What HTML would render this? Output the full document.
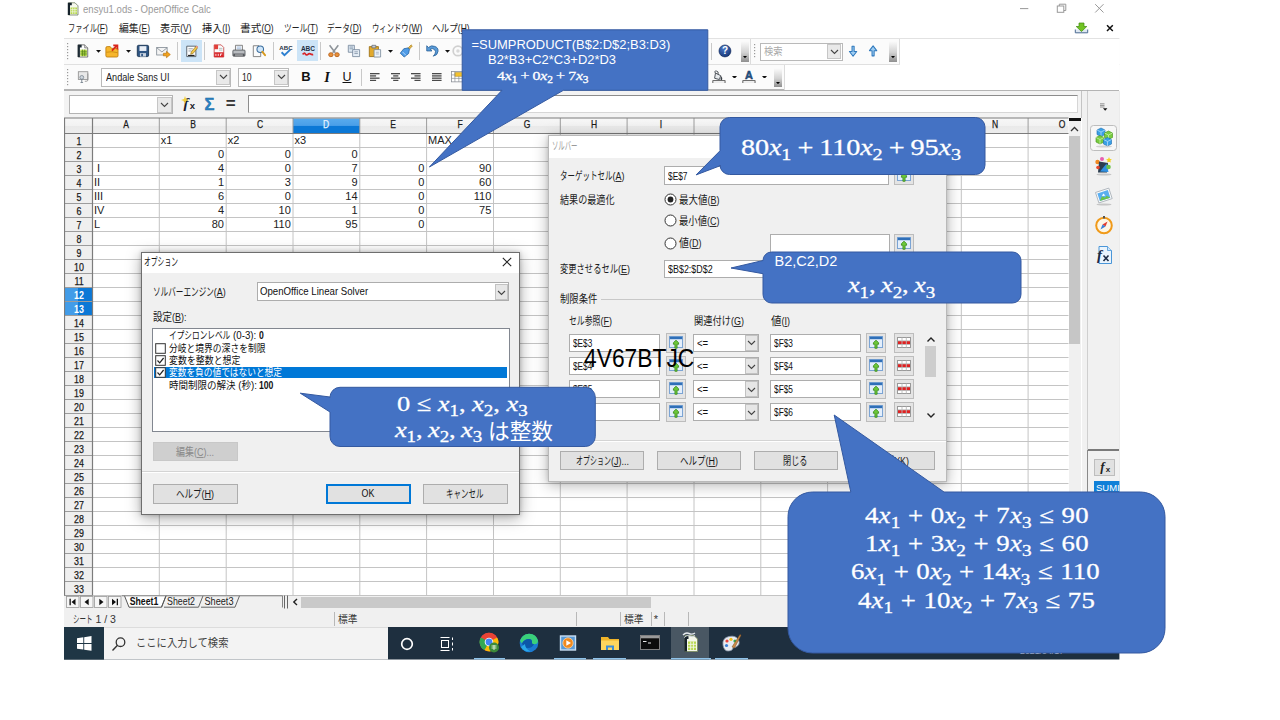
<!DOCTYPE html>
<html lang="ja"><head><meta charset="utf-8"><title>ensyu1.ods - OpenOffice Calc</title>
<style>
html,body{margin:0;padding:0;background:#fff;}
body{width:1280px;height:720px;overflow:hidden;position:relative;font-family:"Liberation Sans",sans-serif;}
#shot{position:absolute;left:0;top:0;width:1280px;height:720px;clip-path:inset(0 160.600px 60.500px 64px);background:#fff;}
div,svg{position:absolute;box-sizing:border-box;}
svg.t{overflow:visible;pointer-events:none}
svg text{font-family:"Liberation Sans","Noto Sans CJK JP",sans-serif;}
.x{white-space:nowrap;}
.m{font-family:"Liberation Serif",serif;color:#fff;white-space:pre;-webkit-text-stroke:.3px #fff;}
.m i{font-style:italic;}
.m sub{font-size:72%;vertical-align:baseline;position:relative;top:0.33em;line-height:0;font-style:normal;}
</style></head><body>
<div id="shot">
<div class="x" style="left:83.2px;transform:scaleX(0.932);transform-origin:0 50%;top:2.8px;height:14.4px;line-height:14.4px;font-size:10.30px;color:#9a9a9a;">ensyu1.ods - OpenOffice Calc</div>
<svg style="left:66.800px;top:2px" width="12" height="13.500" viewBox="0 0 12 13.500"><path d="M1.500 .8H8l3 3V13H1.500z" fill="#f6f8ee" stroke="#5a6a4a" stroke-width=".7"/><path d="M.8 .8h4v2.500H3V13H.8z" fill="#16222b"/><path d="M3.500 5.500H10V12H3.500z" fill="#b7d84b"/><path d="M3.500 7.700H10M3.500 9.800H10M5.700 5.500V12M7.900 5.500V12" stroke="#f6f8ee" stroke-width=".7"/></svg>
<svg style="left:1010px;top:0" width="110" height="20" viewBox="0 0 110 20"><g stroke="#999" stroke-width="1" fill="none"><path d="M10 8.600H18.300"/><rect x="47.300" y="6" width="6.500" height="6.300"/><path d="M49.300 6V4.200H55.800V10.500H53.800"/><path d="M85.200 4.200L93.500 12.500M93.500 4.200L85.200 12.500"/></g></svg>
<svg class="t" style="left:67.2px;top:20.4px" width="43.8" height="16.2" viewBox="0 0 43.8 16.2"><text xml:space="preserve" style="white-space:pre" x="1.0" y="11.9" font-size="10.58" fill="#222" textLength="29.0" lengthAdjust="spacingAndGlyphs">ファイル</text><text xml:space="preserve" style="white-space:pre" x="30.0" y="11.9" font-size="10.58" fill="#222" textLength="2.8" lengthAdjust="spacingAndGlyphs">(</text><text xml:space="preserve" style="white-space:pre" x="32.8" y="11.9" font-size="10.58" fill="#222" textLength="5.2" lengthAdjust="spacingAndGlyphs">F</text><rect x="32.8" y="13.2" width="5.2" height="0.9" fill="#222"/><text xml:space="preserve" style="white-space:pre" x="38.0" y="11.9" font-size="10.58" fill="#222" textLength="2.8" lengthAdjust="spacingAndGlyphs">)</text></svg>
<svg class="t" style="left:118.0px;top:20.4px" width="35.0" height="16.2" viewBox="0 0 35.0 16.2"><text xml:space="preserve" style="white-space:pre" x="1.0" y="11.9" font-size="10.58" fill="#222" textLength="19.7" lengthAdjust="spacingAndGlyphs">編集</text><text xml:space="preserve" style="white-space:pre" x="20.7" y="11.9" font-size="10.58" fill="#222" textLength="2.8" lengthAdjust="spacingAndGlyphs">(</text><text xml:space="preserve" style="white-space:pre" x="23.5" y="11.9" font-size="10.58" fill="#222" textLength="5.6" lengthAdjust="spacingAndGlyphs">E</text><rect x="23.5" y="13.2" width="5.6" height="0.9" fill="#222"/><text xml:space="preserve" style="white-space:pre" x="29.2" y="11.9" font-size="10.58" fill="#222" textLength="2.8" lengthAdjust="spacingAndGlyphs">)</text></svg>
<svg class="t" style="left:159.0px;top:20.4px" width="35.6" height="16.2" viewBox="0 0 35.6 16.2"><text xml:space="preserve" style="white-space:pre" x="1.0" y="11.9" font-size="10.58" fill="#222" textLength="20.3" lengthAdjust="spacingAndGlyphs">表示</text><text xml:space="preserve" style="white-space:pre" x="21.3" y="11.9" font-size="10.58" fill="#222" textLength="2.8" lengthAdjust="spacingAndGlyphs">(</text><text xml:space="preserve" style="white-space:pre" x="24.1" y="11.9" font-size="10.58" fill="#222" textLength="5.6" lengthAdjust="spacingAndGlyphs">V</text><rect x="24.1" y="13.2" width="5.6" height="0.9" fill="#222"/><text xml:space="preserve" style="white-space:pre" x="29.8" y="11.9" font-size="10.58" fill="#222" textLength="2.8" lengthAdjust="spacingAndGlyphs">)</text></svg>
<svg class="t" style="left:200.7px;top:20.4px" width="32.3" height="16.2" viewBox="0 0 32.3 16.2"><text xml:space="preserve" style="white-space:pre" x="1.0" y="11.9" font-size="10.58" fill="#222" textLength="20.3" lengthAdjust="spacingAndGlyphs">挿入</text><text xml:space="preserve" style="white-space:pre" x="21.3" y="11.9" font-size="10.58" fill="#222" textLength="2.8" lengthAdjust="spacingAndGlyphs">(</text><text xml:space="preserve" style="white-space:pre" x="24.1" y="11.9" font-size="10.58" fill="#222" textLength="2.4" lengthAdjust="spacingAndGlyphs">I</text><rect x="24.1" y="13.2" width="2.4" height="0.9" fill="#222"/><text xml:space="preserve" style="white-space:pre" x="26.5" y="11.9" font-size="10.58" fill="#222" textLength="2.8" lengthAdjust="spacingAndGlyphs">)</text></svg>
<svg class="t" style="left:239.4px;top:20.4px" width="37.6" height="16.2" viewBox="0 0 37.6 16.2"><text xml:space="preserve" style="white-space:pre" x="1.0" y="11.9" font-size="10.58" fill="#222" textLength="21.4" lengthAdjust="spacingAndGlyphs">書式</text><text xml:space="preserve" style="white-space:pre" x="22.4" y="11.9" font-size="10.58" fill="#222" textLength="2.8" lengthAdjust="spacingAndGlyphs">(</text><text xml:space="preserve" style="white-space:pre" x="25.2" y="11.9" font-size="10.58" fill="#222" textLength="6.6" lengthAdjust="spacingAndGlyphs">O</text><rect x="25.2" y="13.2" width="6.6" height="0.9" fill="#222"/><text xml:space="preserve" style="white-space:pre" x="31.8" y="11.9" font-size="10.58" fill="#222" textLength="2.8" lengthAdjust="spacingAndGlyphs">)</text></svg>
<svg class="t" style="left:283.0px;top:20.4px" width="38.0" height="16.2" viewBox="0 0 38.0 16.2"><text xml:space="preserve" style="white-space:pre" x="1.0" y="11.9" font-size="10.58" fill="#222" textLength="23.2" lengthAdjust="spacingAndGlyphs">ツール</text><text xml:space="preserve" style="white-space:pre" x="24.2" y="11.9" font-size="10.58" fill="#222" textLength="2.8" lengthAdjust="spacingAndGlyphs">(</text><text xml:space="preserve" style="white-space:pre" x="27.0" y="11.9" font-size="10.58" fill="#222" textLength="5.2" lengthAdjust="spacingAndGlyphs">T</text><rect x="27.0" y="13.2" width="5.2" height="0.9" fill="#222"/><text xml:space="preserve" style="white-space:pre" x="32.2" y="11.9" font-size="10.58" fill="#222" textLength="2.8" lengthAdjust="spacingAndGlyphs">)</text></svg>
<svg class="t" style="left:326.4px;top:20.4px" width="38.6" height="16.2" viewBox="0 0 38.6 16.2"><text xml:space="preserve" style="white-space:pre" x="1.0" y="11.9" font-size="10.58" fill="#222" textLength="22.8" lengthAdjust="spacingAndGlyphs">データ</text><text xml:space="preserve" style="white-space:pre" x="23.8" y="11.9" font-size="10.58" fill="#222" textLength="2.8" lengthAdjust="spacingAndGlyphs">(</text><text xml:space="preserve" style="white-space:pre" x="26.7" y="11.9" font-size="10.58" fill="#222" textLength="6.1" lengthAdjust="spacingAndGlyphs">D</text><rect x="26.7" y="13.2" width="6.1" height="0.9" fill="#222"/><text xml:space="preserve" style="white-space:pre" x="32.8" y="11.9" font-size="10.58" fill="#222" textLength="2.8" lengthAdjust="spacingAndGlyphs">)</text></svg>
<svg class="t" style="left:370.7px;top:20.4px" width="54.3" height="16.2" viewBox="0 0 54.3 16.2"><text xml:space="preserve" style="white-space:pre" x="1.0" y="11.9" font-size="10.58" fill="#222" textLength="36.7" lengthAdjust="spacingAndGlyphs">ウィンドウ</text><text xml:space="preserve" style="white-space:pre" x="37.7" y="11.9" font-size="10.58" fill="#222" textLength="2.8" lengthAdjust="spacingAndGlyphs">(</text><text xml:space="preserve" style="white-space:pre" x="40.5" y="11.9" font-size="10.58" fill="#222" textLength="8.0" lengthAdjust="spacingAndGlyphs">W</text><rect x="40.5" y="13.2" width="8.0" height="0.9" fill="#222"/><text xml:space="preserve" style="white-space:pre" x="48.5" y="11.9" font-size="10.58" fill="#222" textLength="2.8" lengthAdjust="spacingAndGlyphs">)</text></svg>
<svg class="t" style="left:431.4px;top:20.4px" width="41.6" height="16.2" viewBox="0 0 41.6 16.2"><text xml:space="preserve" style="white-space:pre" x="1.0" y="11.9" font-size="10.58" fill="#222" textLength="25.8" lengthAdjust="spacingAndGlyphs">ヘルプ</text><text xml:space="preserve" style="white-space:pre" x="26.8" y="11.9" font-size="10.58" fill="#222" textLength="2.8" lengthAdjust="spacingAndGlyphs">(</text><text xml:space="preserve" style="white-space:pre" x="29.7" y="11.9" font-size="10.58" fill="#222" textLength="6.1" lengthAdjust="spacingAndGlyphs">H</text><rect x="29.7" y="13.2" width="6.1" height="0.9" fill="#222"/><text xml:space="preserve" style="white-space:pre" x="35.8" y="11.9" font-size="10.58" fill="#222" textLength="2.8" lengthAdjust="spacingAndGlyphs">)</text></svg>
<svg style="left:1074px;top:22px" width="42" height="12" viewBox="0 0 42 12"><path d="M1.300 7.500V10.800H13.700V7.500" fill="#dfe8f2" stroke="#4a6a92" stroke-width="1"/><path d="M5 1h5v3.500h2.800L7.500 9.500 2.200 4.500H5z" fill="#72c424" stroke="#3f8a10" stroke-width=".7"/><path d="M33 3.200l5.800 5.800m0-5.800L33 9" stroke="#111" stroke-width="1.500"/></svg>
<div style="left:64.0px;top:38.0px;width:1056.0px;height:1.0px;background:#e2e2e2"></div>
<div style="left:64.0px;top:39.0px;width:1056.0px;height:51.0px;background:#fbfbfb"></div>
<div style="left:64.0px;top:64.0px;width:1056.0px;height:1.0px;background:#e0e0e0"></div>
<div style="left:64.0px;top:89.0px;width:1055.0px;height:2.0px;background:#b4b4b4"></div>
<div style="left:64.0px;top:91.0px;width:1018.0px;height:27.0px;background:#f3f3f3"></div>
<svg style="left:66px;top:42px" width="3" height="20" viewBox="0 0 3 20"><g fill="#9a9a9a"><rect x="1" y="1" width="1.200" height="1.200"/><rect x="1" y="4" width="1.200" height="1.200"/><rect x="1" y="7" width="1.200" height="1.200"/><rect x="1" y="10" width="1.200" height="1.200"/><rect x="1" y="13" width="1.200" height="1.200"/><rect x="1" y="16" width="1.200" height="1.200"/></g></svg>
<svg style="left:66px;top:68px" width="3" height="20" viewBox="0 0 3 20"><g fill="#9a9a9a"><rect x="1" y="1" width="1.200" height="1.200"/><rect x="1" y="4" width="1.200" height="1.200"/><rect x="1" y="7" width="1.200" height="1.200"/><rect x="1" y="10" width="1.200" height="1.200"/><rect x="1" y="13" width="1.200" height="1.200"/><rect x="1" y="16" width="1.200" height="1.200"/></g></svg>
<div style="left:101.0px;top:68.0px;width:130.0px;height:18.5px;background:#fff;border:1px solid #b9b9b9"></div>
<div class="x" style="left:105.5px;transform:scaleX(0.788);transform-origin:0 50%;top:69.2px;height:16.2px;line-height:16.2px;font-size:11.60px;color:#222;">Andale Sans UI</div>
<div style="left:216.0px;top:69.5px;width:14.0px;height:15.5px;background:#e9e9e9;border:1px solid #c6c6c6"></div>
<svg style="left:219px;top:74px" width="9" height="6" viewBox="0 0 9 6"><path d="M1 1l3.500 3.500L8 1" fill="none" stroke="#444" stroke-width="1.100"/></svg>
<div style="left:238.0px;top:68.0px;width:51.0px;height:18.5px;background:#fff;border:1px solid #b9b9b9"></div>
<div class="x" style="left:242.2px;transform:scaleX(0.744);transform-origin:0 50%;top:69.2px;height:16.2px;line-height:16.2px;font-size:11.60px;color:#222;">10</div>
<div style="left:274.0px;top:69.5px;width:14.0px;height:15.5px;background:#e9e9e9;border:1px solid #c6c6c6"></div>
<svg style="left:277px;top:74px" width="9" height="6" viewBox="0 0 9 6"><path d="M1 1l3.500 3.500L8 1" fill="none" stroke="#444" stroke-width="1.100"/></svg>
<div class="x" style="left:156.0px;width:300px;text-align:center;top:68.4px;height:18.2px;line-height:18.2px;font-size:13.00px;color:#111;font-weight:bold">B</div>
<div class="x" style="left:177.0px;width:300px;text-align:center;top:67.2px;height:20.3px;line-height:20.3px;font-size:14.50px;color:#111;font-style:italic;font-family:'Liberation Serif',serif;font-weight:bold">I</div>
<div class="x" style="left:197.0px;width:300px;text-align:center;top:68.8px;height:17.5px;line-height:17.5px;font-size:12.50px;color:#111;text-decoration:underline">U</div>
<div style="left:69.0px;top:95.0px;width:104.0px;height:19.0px;background:#fff;border:1px solid #b4b4b4"></div>
<div style="left:157.0px;top:96.5px;width:15.0px;height:16.0px;background:#e9e9e9;border:1px solid #c6c6c6"></div>
<svg style="left:160px;top:102px" width="9" height="6" viewBox="0 0 9 6"><path d="M1 1l3.500 3.500L8 1" fill="none" stroke="#444" stroke-width="1.100"/></svg>
<div class="x" style="left:38.0px;width:300px;text-align:center;top:92.5px;height:21.0px;line-height:21.0px;font-size:15.00px;color:#1a1a2a;font-style:italic;font-family:'Liberation Serif',serif;font-weight:bold;margin-left:-2px">f</div>
<div class="x" style="left:42.3px;width:300px;text-align:center;top:98.6px;height:13.3px;line-height:13.3px;font-size:9.50px;color:#1a1a2a;font-weight:bold">x</div>
<div class="x" style="left:59.5px;width:300px;text-align:center;top:92.5px;height:23.1px;line-height:23.1px;font-size:16.50px;color:#2a86c8;font-weight:bold;-webkit-text-stroke:.4px #1a5c94">Σ</div>
<div class="x" style="left:80.8px;width:300px;text-align:center;top:91.9px;height:23.8px;line-height:23.8px;font-size:17.00px;color:#333;font-weight:bold">=</div>
<svg style="left:180.500px;top:95.500px" width="8" height="8" viewBox="0 0 8 8"><path d="M4 0l1 3 3 1-3 1-1 3-1-3-3-1 3-1z" fill="#f2cf3a"/></svg>
<div style="left:248.0px;top:95.0px;width:829.5px;height:18.0px;background:#fff;border:1px solid #d6d6d6;border-top:1.500px solid #8c8c8c;border-left:1.500px solid #8c8c8c"></div>
<div style="left:1081.0px;top:91.0px;width:1.0px;height:27.0px;background:#c4c4c4"></div>
<svg style="left:76.2px;top:44.2px" width="13.92" height="13.92" viewBox="0 0 16 16"><path d="M2.500 1H10l3.500 3.500V15H2.500z" fill="#fdfdfd" stroke="#555" stroke-width=".9"/><path d="M2 1h4.500v3H4.500V15H2z" fill="#1c2a33"/><path d="M5 6.500H12.500V14H5z" fill="#b7d84b"/><path d="M5 9h7.500M5 11.500h7.500M7.500 6.500V14M10 6.500V14" stroke="#4d7f16" stroke-width=".8"/><path d="M10 1v3.500h3.500" fill="#ddd" stroke="#555" stroke-width=".7"/></svg>
<svg style="left:95.5px;top:49.8px" width="5.05" height="2.87" viewBox="0 0 5.8 3.3"><path d="M0 0h5.800L2.900 3.300z" fill="#111"/></svg>
<svg style="left:105.4px;top:44.2px" width="13.92" height="13.92" viewBox="0 0 16 16"><path d="M1 4.500Q1 3 2.500 3H6l1.500 2H14q1 0 1 1v7.500q0 1.500-1.500 1.500H2.500Q1 15 1 13.500z" fill="#f7b62d" stroke="#b97708" stroke-width=".9"/><path d="M1.500 9.500Q8 8 14.500 10" stroke="#c98b10" stroke-width="1" fill="none"/><path d="M8 7.500L13 2.500M9.500 1.500h4.800v4.800" stroke="#d9251c" stroke-width="2" fill="none"/></svg>
<svg style="left:125.5px;top:49.8px" width="5.05" height="2.87" viewBox="0 0 5.8 3.3"><path d="M0 0h5.800L2.900 3.300z" fill="#111"/></svg>
<svg style="left:136.0px;top:44.2px" width="13.92" height="13.92" viewBox="0 0 16 16"><rect x="1.500" y="1.500" width="13" height="13" rx="1.500" fill="#2f5583" stroke="#16304f" stroke-width="1"/><rect x="4" y="2.500" width="8" height="5.500" fill="#e9eef5"/><rect x="4.500" y="10.500" width="7" height="4" fill="#c9d3e0"/><rect x="6" y="11.300" width="2" height="2.700" fill="#2f5583"/></svg>
<svg style="left:156.2px;top:44.7px" width="15.66" height="13.92" viewBox="0 0 18 16"><rect x=".8" y="3" width="12" height="8.500" fill="#f4f4f4" stroke="#7d8790" stroke-width=".9"/><path d="M1 3.300L6.800 8l5.800-4.700" fill="none" stroke="#7d8790" stroke-width=".9"/><path d="M8.500 9.500h3.500V7.300L16.500 11 12 14.700V12.500H8.500z" fill="#f2a11a" stroke="#b66f07" stroke-width=".7"/></svg>
<div style="left:176.9px;top:42.0px;width:1.0px;height:18.0px;background:#c9c9c9"></div>
<div style="left:181.0px;top:40.3px;width:20.8px;height:21.5px;background:#cce4f7"></div>
<svg style="left:184.5px;top:44.2px" width="13.92" height="13.92" viewBox="0 0 16 16"><path d="M2 2.500H12.500V14.500H2z" fill="#fdfdfd" stroke="#4a5560" stroke-width="1"/><path d="M4 5.500h5M4 8h3.500" stroke="#8a949e" stroke-width="1"/><path d="M3.500 12.500h7.500v1.300H3.500z" fill="#222"/><path d="M7.200 9.200L13 2.200l2 1.600L9.300 10.900l-2.800 1z" fill="#f2c84b" stroke="#8a6a14" stroke-width=".7"/><path d="M12.300 3l.9-1.100 2 1.600-.9 1.100z" fill="#e88a9a"/></svg>
<div style="left:203.9px;top:42.0px;width:1.0px;height:18.0px;background:#c9c9c9"></div>
<svg style="left:211.5px;top:44.2px" width="13.92" height="13.92" viewBox="0 0 16 16"><path d="M2.500 1H10.500l3 3V15H2.500z" fill="#fbfbfb" stroke="#c43a3a" stroke-width=".9"/><path d="M2.500 1h4.500v5H2.500z" fill="#e0403a"/><path d="M2.500 9.500H13.500V15H2.500z" fill="#d8262a"/><path d="M4.500 11.300v2.400M7.200 11.300v2.400M9.800 11.300v2.400M9.800 11.500h2" stroke="#fff" stroke-width="1"/><path d="M8 5h4M8 7h4" stroke="#9aa" stroke-width=".8"/></svg>
<svg style="left:231.8px;top:44.2px" width="13.92" height="13.92" viewBox="0 0 16 16"><path d="M4 1.500H12V8H4z" fill="#f7f7f7" stroke="#666" stroke-width=".9"/><path d="M5.500 3.500h5M5.500 5.500h5" stroke="#8fb0d8" stroke-width=".9"/><path d="M1 8Q1 7 2 7H14q1 0 1 1v5.500H1z" fill="#b9bcc0" stroke="#4c4f54" stroke-width=".9"/><path d="M1.500 11H14.500V14.500H1.500z" fill="#55585d"/><path d="M3.500 12.700h9" stroke="#d8d8d8" stroke-width="1"/></svg>
<svg style="left:252.0px;top:44.2px" width="13.92" height="13.92" viewBox="0 0 16 16"><path d="M1.500 2H8l2 2V14.500H1.500z" fill="#fbfbfb" stroke="#666" stroke-width=".9"/><circle cx="9.500" cy="6" r="3.800" fill="#cfe6fa" stroke="#3c6e9e" stroke-width="1.200"/><path d="M12 9l3 3.800" stroke="#d89a1e" stroke-width="2.200" stroke-linecap="round"/></svg>
<div style="left:272.5px;top:42.0px;width:1.0px;height:18.0px;background:#c9c9c9"></div>
<svg style="left:279.4px;top:44.2px" width="13.92" height="13.92" viewBox="0 0 16 16"><text x="8" y="7" font-size="7" font-weight="bold" text-anchor="middle" fill="#1f2f44">ABC</text><path d="M3 9.500l3.300 3.300L13 6.500" fill="none" stroke="#2c7fd0" stroke-width="2.200"/></svg>
<div style="left:297.3px;top:40.3px;width:20.7px;height:21.2px;background:#cce4f7"></div>
<svg style="left:300.7px;top:44.2px" width="13.92" height="13.92" viewBox="0 0 16 16"><text x="8" y="8" font-size="7.500" font-weight="bold" text-anchor="middle" fill="#1f2f44">ABC</text><path d="M2 12q1.500-2.500 3-.5t3 .5 3-.5 3 .5" fill="none" stroke="#d8262a" stroke-width="2"/></svg>
<div style="left:320.3px;top:42.0px;width:1.0px;height:18.0px;background:#c9c9c9"></div>
<svg style="left:327.4px;top:44.2px" width="13.92" height="13.92" viewBox="0 0 16 16"><path d="M3 1.500L9.500 10M13 1.500L6.500 10" stroke="#8d9399" stroke-width="1.800"/><ellipse cx="4.500" cy="12.300" rx="2.600" ry="2.300" fill="#e8913a" stroke="#b5601a" stroke-width="1"/><ellipse cx="11.500" cy="12.300" rx="2.600" ry="2.300" fill="#e8913a" stroke="#b5601a" stroke-width="1"/></svg>
<svg style="left:347.4px;top:44.2px" width="13.92" height="13.92" viewBox="0 0 16 16"><path d="M1.500 1.500H8.500V9.500H1.500z" fill="#dde8f2" stroke="#6f8297" stroke-width=".9"/><path d="M3 3.500h4M3 5.500h4" stroke="#6f8297" stroke-width=".8"/><path d="M6.500 6.500H14.500V14.500H6.500z" fill="#e6eef6" stroke="#6f8297" stroke-width=".9"/><path d="M8.500 9h4M8.500 11h4" stroke="#6f8297" stroke-width=".8"/></svg>
<svg style="left:368.0px;top:44.2px" width="13.92" height="13.92" viewBox="0 0 16 16"><path d="M1.500 3H12V14.500H1.500z" fill="#e2a92c" stroke="#94660c" stroke-width=".9"/><path d="M4.500 1.500h4.500v3H4.500z" fill="#c7ccd2" stroke="#596069" stroke-width=".8"/><path d="M7 6.500H14.500V15H7z" fill="#eef3f8" stroke="#76869a" stroke-width=".9"/><path d="M9 9.500h3.500M9 11.500h3.500" stroke="#8ea0b5" stroke-width=".8"/></svg>
<svg style="left:387.5px;top:49.8px" width="5.05" height="2.87" viewBox="0 0 5.8 3.3"><path d="M0 0h5.800L2.900 3.300z" fill="#111"/></svg>
<svg style="left:398.6px;top:44.2px" width="13.92" height="13.92" viewBox="0 0 16 16"><path d="M10.500 4.500L14 1l1.300 1.300L12 6z" fill="#e9b84a" stroke="#9a7412" stroke-width=".7"/><path d="M5.500 5.500l5-1 1.500 1.500-1 5L6 15 1.500 10.500z" fill="#4f9be6" stroke="#215f9f" stroke-width=".9"/><path d="M4 9l4 4" stroke="#bfe0ff" stroke-width="1"/></svg>
<div style="left:418.7px;top:42.0px;width:1.0px;height:18.0px;background:#c9c9c9"></div>
<svg style="left:424.7px;top:44.2px" width="13.92" height="13.92" viewBox="0 0 16 16"><path d="M2 2v6h6L6 6q3-1.500 5 .5t.5 5l-2 2.500q5-1 5.500-5.500T11 2.700Q7 1 4 4z" fill="#5a9bd8" stroke="#285f96" stroke-width=".9"/></svg>
<svg style="left:444.5px;top:49.8px" width="5.05" height="2.87" viewBox="0 0 5.8 3.3"><path d="M0 0h5.800L2.900 3.300z" fill="#111"/></svg>
<svg style="left:451.0px;top:44.2px" width="13.92" height="13.92" viewBox="0 0 16 16"><circle cx="8" cy="8" r="5.500" fill="none" stroke="#d0d0d0" stroke-width="2"/><circle cx="8" cy="8" r="2" fill="#d8d8d8"/></svg>
<div style="left:710.5px;top:43.0px;width:1.0px;height:17.0px;background:#c9c9c9"></div>
<svg style="left:718.0px;top:44.1px" width="13.92" height="13.92" viewBox="0 0 16 16"><defs><radialGradient id="hq" cx=".4" cy=".3" r=".8"><stop offset="0" stop-color="#4a78c8"/><stop offset="1" stop-color="#13306e"/></radialGradient></defs><circle cx="8" cy="8" r="6.900" fill="url(#hq)" stroke="#0e2454" stroke-width=".7"/><text x="8" y="12" font-size="11.500" font-weight="bold" text-anchor="middle" fill="#fff">?</text></svg>
<div style="left:741.0px;top:41.0px;width:7.5px;height:20.8px;background:linear-gradient(#fcfcfc,#d2d2d2 55%,#8f8f8f)"></div>
<svg style="left:742.7px;top:56.4px" width="4.00" height="2.26" viewBox="0 0 4.6 2.6"><path d="M0 0h4.600L2.300 2.600z" fill="#000"/></svg>
<div style="left:749.5px;top:39.0px;width:1.0px;height:25.0px;background:#dcdcdc"></div>
<svg style="left:753px;top:43px" width="3" height="18" viewBox="0 0 3 18"><g fill="#9a9a9a"><rect x="1" y="1" width="1.200" height="1.200"/><rect x="1" y="4" width="1.200" height="1.200"/><rect x="1" y="7" width="1.200" height="1.200"/><rect x="1" y="10" width="1.200" height="1.200"/><rect x="1" y="13" width="1.200" height="1.200"/></g></svg>
<div style="left:760.0px;top:42.5px;width:82.7px;height:18.0px;background:#fff;border:1px solid #b9b9b9"></div>
<svg class="t" style="left:763.0px;top:43.2px" width="23.0" height="16.2" viewBox="0 0 23.0 16.2"><text xml:space="preserve" style="white-space:pre" x="1.0" y="11.9" font-size="10.58" fill="#a8a8a8" textLength="18.5" lengthAdjust="spacingAndGlyphs">検索</text></svg>
<div style="left:827.0px;top:44.0px;width:14.3px;height:15.0px;background:#e9e9e9;border:1px solid #c6c6c6"></div>
<svg style="left:829.700px;top:48.500px" width="9" height="6" viewBox="0 0 9 6"><path d="M1 1l3.500 3.500L8 1" fill="none" stroke="#444" stroke-width="1.100"/></svg>
<svg style="left:846.5px;top:45.1px" width="12.18" height="12.18" viewBox="0 0 14 14"><path d="M5.800 1.500h2.400v6h3L7 13 2.800 7.500h3z" fill="#9fcdf2" stroke="#2f79bd" stroke-width="1.200" stroke-linejoin="round"/></svg>
<svg style="left:867.2px;top:45.1px" width="12.18" height="12.18" viewBox="0 0 14 14"><path d="M5.800 12.500h2.400v-6h3L7 1 2.800 6.500h3z" fill="#9fcdf2" stroke="#2f79bd" stroke-width="1.200" stroke-linejoin="round"/></svg>
<div style="left:889.0px;top:41.0px;width:7.8px;height:20.8px;background:linear-gradient(#fcfcfc,#d2d2d2 55%,#8f8f8f)"></div>
<svg style="left:890.9px;top:56.4px" width="4.00" height="2.26" viewBox="0 0 4.6 2.6"><path d="M0 0h4.600L2.300 2.600z" fill="#000"/></svg>
<div style="left:899.0px;top:39.0px;width:1.0px;height:25.0px;background:#dcdcdc"></div>
<div style="left:900.0px;top:39.0px;width:220.0px;height:51.0px;background:#fff"></div>
<div style="left:784.5px;top:65.0px;width:336.0px;height:25.0px;background:#fff"></div>
<svg style="left:76.7px;top:69.5px" width="13.92" height="13.92" viewBox="0 0 16 16"><rect x="1.500" y="2" width="11" height="9" fill="#e8e8e8" stroke="#8a8a8a" stroke-width=".9"/><rect x="3.500" y="4" width="11" height="9.500" fill="#f4f4f4" stroke="#8a8a8a" stroke-width=".9" opacity=".0"/><circle cx="5.500" cy="8.500" r="2.200" fill="#cfd6dd" stroke="#6d7a86" stroke-width=".8"/><path d="M5.500 10.500V14.500M4 14.500h3" stroke="#6d7a86" stroke-width="1"/><path d="M12.500 4v7.500q0 1.500-2 1.500H9" fill="none" stroke="#8a8a8a" stroke-width=".9"/></svg>
<div style="left:361.2px;top:69.0px;width:1.0px;height:17.0px;background:#c9c9c9"></div>
<svg style="left:370.2px;top:72.9px" width="9.57" height="8.27" viewBox="0 0 11 9.5"><rect x="0.0" y="0.0" width="11" height="1.500" fill="#4a4a4a"/><rect x="0.0" y="2.6" width="7" height="1.500" fill="#4a4a4a"/><rect x="0.0" y="5.2" width="11" height="1.500" fill="#4a4a4a"/><rect x="0.0" y="7.8" width="7" height="1.500" fill="#4a4a4a"/></svg>
<svg style="left:390.5px;top:72.9px" width="9.57" height="8.27" viewBox="0 0 11 9.5"><rect x="0.0" y="0.0" width="11" height="1.500" fill="#4a4a4a"/><rect x="2.5" y="2.6" width="6" height="1.500" fill="#4a4a4a"/><rect x="0.0" y="5.2" width="11" height="1.500" fill="#4a4a4a"/><rect x="2.5" y="7.8" width="6" height="1.500" fill="#4a4a4a"/></svg>
<svg style="left:411.2px;top:72.9px" width="9.57" height="8.27" viewBox="0 0 11 9.5"><rect x="0.0" y="0.0" width="11" height="1.500" fill="#4a4a4a"/><rect x="4.0" y="2.6" width="7" height="1.500" fill="#4a4a4a"/><rect x="0.0" y="5.2" width="11" height="1.500" fill="#4a4a4a"/><rect x="4.0" y="7.8" width="7" height="1.500" fill="#4a4a4a"/></svg>
<svg style="left:432.1px;top:72.9px" width="9.57" height="8.27" viewBox="0 0 11 9.5"><rect x="0.0" y="0.0" width="11" height="1.500" fill="#4a4a4a"/><rect x="0.0" y="2.6" width="11" height="1.500" fill="#4a4a4a"/><rect x="0.0" y="5.2" width="11" height="1.500" fill="#4a4a4a"/><rect x="0.0" y="7.8" width="11" height="1.500" fill="#4a4a4a"/></svg>
<svg style="left:450.6px;top:71.3px" width="12.18" height="11.31" viewBox="0 0 14 13"><rect x=".5" y=".5" width="13" height="12" fill="#fff" stroke="#8a8f96" stroke-width=".9"/><rect x="4.500" y="2" width="9" height="4" fill="#f5c32e" stroke="#b98d12" stroke-width=".7"/><path d="M.5 4.500H4.500M.5 8.500H13.500M4.500 .5V12.500M9 6V12.500" stroke="#8a8f96" stroke-width=".8"/></svg>
<svg style="left:711.6px;top:69.5px" width="13.92" height="13.92" viewBox="0 0 16 16"><path d="M4 3.500L10 6.500 8.500 11 3 9.500z" fill="#e8ebee" stroke="#3a3f46" stroke-width="1"/><path d="M4 3.500Q2 1 5 1.200T7 5" fill="none" stroke="#3a3f46" stroke-width="1"/><path d="M10.500 7q2 2.500 1.200 4t-2-.3z" fill="#3a3f46"/><rect x="1" y="12.300" width="14" height="3" fill="#fff" stroke="#333" stroke-width=".9"/></svg>
<svg style="left:731.9px;top:75.6px" width="5.05" height="2.87" viewBox="0 0 5.8 3.3"><path d="M0 0h5.800L2.900 3.300z" fill="#111"/></svg>
<svg style="left:742.0px;top:69.5px" width="13.92" height="13.92" viewBox="0 0 16 16"><text x="8" y="10.500" font-size="12.500" font-weight="bold" text-anchor="middle" fill="#24588f" stroke="#0f2c4f" stroke-width=".5">A</text><rect x="1" y="12.300" width="14" height="3" fill="#fff" stroke="#333" stroke-width=".9"/></svg>
<svg style="left:761.5px;top:75.6px" width="5.05" height="2.87" viewBox="0 0 5.8 3.3"><path d="M0 0h5.800L2.900 3.300z" fill="#111"/></svg>
<div style="left:774.3px;top:67.8px;width:7.9px;height:19.4px;background:linear-gradient(#fcfcfc,#d2d2d2 55%,#8f8f8f)"></div>
<svg style="left:776.2px;top:81.8px" width="4.00" height="2.26" viewBox="0 0 4.6 2.6"><path d="M0 0h4.600L2.300 2.600z" fill="#000"/></svg>
<div style="left:783.5px;top:65.0px;width:1.0px;height:25.0px;background:#dcdcdc"></div>
<svg style="left:0;top:0" width="1280" height="720" viewBox="0 0 1280 720"><defs><linearGradient id="hg" x1="0" y1="0" x2="0" y2="1"><stop offset="0" stop-color="#f7f7f7"/><stop offset=".5" stop-color="#f2f2f2"/><stop offset=".5" stop-color="#e9e9e9"/><stop offset="1" stop-color="#ededed"/></linearGradient><linearGradient id="hb" x1="0" y1="0" x2="0" y2="1"><stop offset="0" stop-color="#58abee"/><stop offset=".48" stop-color="#4a9fe8"/><stop offset=".52" stop-color="#0b78d6"/><stop offset="1" stop-color="#0b78d6"/></linearGradient></defs><rect x="64" y="118" width="1004.5" height="478" fill="#fff"/><rect x="64" y="118.0" width="1004.5" height="15.5" fill="url(#hg)"/><rect x="64" y="133.5" width="28.5" height="462.0" fill="#efefef"/><rect x="293.0" y="118.5" width="66.8" height="14.5" fill="url(#hb)"/><rect x="64.5" y="287.5" width="28.0" height="28.0" fill="#0b78d6"/><rect x="64.5" y="287.5" width="13.500" height="28.0" fill="#429ce8"/><path d="M92.5 147.5H1068.5M92.5 161.5H1068.5M92.5 175.5H1068.5M92.5 189.5H1068.5M92.5 203.5H1068.5M92.5 217.5H1068.5M92.5 231.5H1068.5M92.5 245.5H1068.5M92.5 259.5H1068.5M92.5 273.5H1068.5M92.5 287.5H1068.5M92.5 301.5H1068.5M92.5 315.5H1068.5M92.5 329.5H1068.5M92.5 343.5H1068.5M92.5 357.5H1068.5M92.5 371.5H1068.5M92.5 385.5H1068.5M92.5 399.5H1068.5M92.5 413.5H1068.5M92.5 427.5H1068.5M92.5 441.5H1068.5M92.5 455.5H1068.5M92.5 469.5H1068.5M92.5 483.5H1068.5M92.5 497.5H1068.5M92.5 511.5H1068.5M92.5 525.5H1068.5M92.5 539.5H1068.5M92.5 553.5H1068.5M92.5 567.5H1068.5M92.5 581.5H1068.5M92.5 595.5H1068.5M159.3 133.5V595.5M226.2 133.5V595.5M293.0 133.5V595.5M359.8 133.5V595.5M426.6 133.5V595.5M493.5 133.5V595.5M560.3 133.5V595.5M627.1 133.5V595.5M694.0 133.5V595.5M760.8 133.5V595.5M827.6 133.5V595.5M894.5 133.5V595.5M961.3 133.5V595.5M1028.1 133.5V595.5" stroke="#c4c4c4" stroke-width="1" fill="none"/><path d="M64 147.5H92.5M64 161.5H92.5M64 175.5H92.5M64 189.5H92.5M64 203.5H92.5M64 217.5H92.5M64 231.5H92.5M64 245.5H92.5M64 259.5H92.5M64 273.5H92.5M64 287.5H92.5M64 301.5H92.5M64 315.5H92.5M64 329.5H92.5M64 343.5H92.5M64 357.5H92.5M64 371.5H92.5M64 385.5H92.5M64 399.5H92.5M64 413.5H92.5M64 427.5H92.5M64 441.5H92.5M64 455.5H92.5M64 469.5H92.5M64 483.5H92.5M64 497.5H92.5M64 511.5H92.5M64 525.5H92.5M64 539.5H92.5M64 553.5H92.5M64 567.5H92.5M64 581.5H92.5M64 595.5H92.5M159.3 118.0V133.5M226.2 118.0V133.5M293.0 118.0V133.5M359.8 118.0V133.5M426.6 118.0V133.5M493.5 118.0V133.5M560.3 118.0V133.5M627.1 118.0V133.5M694.0 118.0V133.5M760.8 118.0V133.5M827.6 118.0V133.5M894.5 118.0V133.5M961.3 118.0V133.5M1028.1 118.0V133.5" stroke="#9c9c9c" stroke-width="1" fill="none"/><path d="M64 133.5H1068.5M92.5 118.0V595.5M64 118.0H1068.5M64.5 118.0V595.5" stroke="#7c7c7c" stroke-width="1.200" fill="none"/></svg>
<div class="x" style="left:-24.1px;width:300px;text-align:center;transform:scaleX(0.820);transform-origin:50% 50%;top:118.2px;height:14.6px;line-height:14.6px;font-size:10.40px;color:#1a1a1a;-webkit-text-stroke:.25px #1a1a1a">A</div>
<div class="x" style="left:42.7px;width:300px;text-align:center;transform:scaleX(0.820);transform-origin:50% 50%;top:118.2px;height:14.6px;line-height:14.6px;font-size:10.40px;color:#1a1a1a;-webkit-text-stroke:.25px #1a1a1a">B</div>
<div class="x" style="left:109.6px;width:300px;text-align:center;transform:scaleX(0.820);transform-origin:50% 50%;top:118.2px;height:14.6px;line-height:14.6px;font-size:10.40px;color:#1a1a1a;-webkit-text-stroke:.25px #1a1a1a">C</div>
<div class="x" style="left:176.4px;width:300px;text-align:center;transform:scaleX(0.820);transform-origin:50% 50%;top:118.2px;height:14.6px;line-height:14.6px;font-size:10.40px;color:#e6f3ff;-webkit-text-stroke:.25px #e6f3ff">D</div>
<div class="x" style="left:243.2px;width:300px;text-align:center;transform:scaleX(0.820);transform-origin:50% 50%;top:118.2px;height:14.6px;line-height:14.6px;font-size:10.40px;color:#1a1a1a;-webkit-text-stroke:.25px #1a1a1a">E</div>
<div class="x" style="left:310.1px;width:300px;text-align:center;transform:scaleX(0.820);transform-origin:50% 50%;top:118.2px;height:14.6px;line-height:14.6px;font-size:10.40px;color:#1a1a1a;-webkit-text-stroke:.25px #1a1a1a">F</div>
<div class="x" style="left:376.9px;width:300px;text-align:center;transform:scaleX(0.820);transform-origin:50% 50%;top:118.2px;height:14.6px;line-height:14.6px;font-size:10.40px;color:#1a1a1a;-webkit-text-stroke:.25px #1a1a1a">G</div>
<div class="x" style="left:443.7px;width:300px;text-align:center;transform:scaleX(0.820);transform-origin:50% 50%;top:118.2px;height:14.6px;line-height:14.6px;font-size:10.40px;color:#1a1a1a;-webkit-text-stroke:.25px #1a1a1a">H</div>
<div class="x" style="left:510.6px;width:300px;text-align:center;transform:scaleX(0.820);transform-origin:50% 50%;top:118.2px;height:14.6px;line-height:14.6px;font-size:10.40px;color:#1a1a1a;-webkit-text-stroke:.25px #1a1a1a">I</div>
<div class="x" style="left:577.4px;width:300px;text-align:center;transform:scaleX(0.820);transform-origin:50% 50%;top:118.2px;height:14.6px;line-height:14.6px;font-size:10.40px;color:#1a1a1a;-webkit-text-stroke:.25px #1a1a1a">J</div>
<div class="x" style="left:644.2px;width:300px;text-align:center;transform:scaleX(0.820);transform-origin:50% 50%;top:118.2px;height:14.6px;line-height:14.6px;font-size:10.40px;color:#1a1a1a;-webkit-text-stroke:.25px #1a1a1a">K</div>
<div class="x" style="left:711.0px;width:300px;text-align:center;transform:scaleX(0.820);transform-origin:50% 50%;top:118.2px;height:14.6px;line-height:14.6px;font-size:10.40px;color:#1a1a1a;-webkit-text-stroke:.25px #1a1a1a">L</div>
<div class="x" style="left:777.9px;width:300px;text-align:center;transform:scaleX(0.820);transform-origin:50% 50%;top:118.2px;height:14.6px;line-height:14.6px;font-size:10.40px;color:#1a1a1a;-webkit-text-stroke:.25px #1a1a1a">M</div>
<div class="x" style="left:844.7px;width:300px;text-align:center;transform:scaleX(0.820);transform-origin:50% 50%;top:118.2px;height:14.6px;line-height:14.6px;font-size:10.40px;color:#1a1a1a;-webkit-text-stroke:.25px #1a1a1a">N</div>
<div class="x" style="left:912.0px;width:300px;text-align:center;transform:scaleX(0.820);transform-origin:50% 50%;top:118.2px;height:14.6px;line-height:14.6px;font-size:10.40px;color:#1a1a1a;-webkit-text-stroke:.25px #1a1a1a">O</div>
<div class="x" style="left:-71.1px;width:300px;text-align:center;transform:scaleX(0.860);transform-origin:50% 50%;top:134.8px;height:14.4px;line-height:14.4px;font-size:10.30px;color:#1a1a1a;-webkit-text-stroke:.25px #1a1a1a">1</div>
<div class="x" style="left:-71.1px;width:300px;text-align:center;transform:scaleX(0.860);transform-origin:50% 50%;top:148.8px;height:14.4px;line-height:14.4px;font-size:10.30px;color:#1a1a1a;-webkit-text-stroke:.25px #1a1a1a">2</div>
<div class="x" style="left:-71.1px;width:300px;text-align:center;transform:scaleX(0.860);transform-origin:50% 50%;top:162.8px;height:14.4px;line-height:14.4px;font-size:10.30px;color:#1a1a1a;-webkit-text-stroke:.25px #1a1a1a">3</div>
<div class="x" style="left:-71.1px;width:300px;text-align:center;transform:scaleX(0.860);transform-origin:50% 50%;top:176.8px;height:14.4px;line-height:14.4px;font-size:10.30px;color:#1a1a1a;-webkit-text-stroke:.25px #1a1a1a">4</div>
<div class="x" style="left:-71.1px;width:300px;text-align:center;transform:scaleX(0.860);transform-origin:50% 50%;top:190.8px;height:14.4px;line-height:14.4px;font-size:10.30px;color:#1a1a1a;-webkit-text-stroke:.25px #1a1a1a">5</div>
<div class="x" style="left:-71.1px;width:300px;text-align:center;transform:scaleX(0.860);transform-origin:50% 50%;top:204.8px;height:14.4px;line-height:14.4px;font-size:10.30px;color:#1a1a1a;-webkit-text-stroke:.25px #1a1a1a">6</div>
<div class="x" style="left:-71.1px;width:300px;text-align:center;transform:scaleX(0.860);transform-origin:50% 50%;top:218.8px;height:14.4px;line-height:14.4px;font-size:10.30px;color:#1a1a1a;-webkit-text-stroke:.25px #1a1a1a">7</div>
<div class="x" style="left:-71.1px;width:300px;text-align:center;transform:scaleX(0.860);transform-origin:50% 50%;top:232.8px;height:14.4px;line-height:14.4px;font-size:10.30px;color:#1a1a1a;-webkit-text-stroke:.25px #1a1a1a">8</div>
<div class="x" style="left:-71.1px;width:300px;text-align:center;transform:scaleX(0.860);transform-origin:50% 50%;top:246.8px;height:14.4px;line-height:14.4px;font-size:10.30px;color:#1a1a1a;-webkit-text-stroke:.25px #1a1a1a">9</div>
<div class="x" style="left:-71.1px;width:300px;text-align:center;transform:scaleX(0.860);transform-origin:50% 50%;top:260.8px;height:14.4px;line-height:14.4px;font-size:10.30px;color:#1a1a1a;-webkit-text-stroke:.25px #1a1a1a">10</div>
<div class="x" style="left:-71.1px;width:300px;text-align:center;transform:scaleX(0.860);transform-origin:50% 50%;top:274.8px;height:14.4px;line-height:14.4px;font-size:10.30px;color:#1a1a1a;-webkit-text-stroke:.25px #1a1a1a">11</div>
<div class="x" style="left:-71.1px;width:300px;text-align:center;transform:scaleX(0.860);transform-origin:50% 50%;top:288.8px;height:14.4px;line-height:14.4px;font-size:10.30px;color:#fff;font-weight:bold;">12</div>
<div class="x" style="left:-71.1px;width:300px;text-align:center;transform:scaleX(0.860);transform-origin:50% 50%;top:302.8px;height:14.4px;line-height:14.4px;font-size:10.30px;color:#fff;font-weight:bold;">13</div>
<div class="x" style="left:-71.1px;width:300px;text-align:center;transform:scaleX(0.860);transform-origin:50% 50%;top:316.8px;height:14.4px;line-height:14.4px;font-size:10.30px;color:#1a1a1a;-webkit-text-stroke:.25px #1a1a1a">14</div>
<div class="x" style="left:-71.1px;width:300px;text-align:center;transform:scaleX(0.860);transform-origin:50% 50%;top:330.8px;height:14.4px;line-height:14.4px;font-size:10.30px;color:#1a1a1a;-webkit-text-stroke:.25px #1a1a1a">15</div>
<div class="x" style="left:-71.1px;width:300px;text-align:center;transform:scaleX(0.860);transform-origin:50% 50%;top:344.8px;height:14.4px;line-height:14.4px;font-size:10.30px;color:#1a1a1a;-webkit-text-stroke:.25px #1a1a1a">16</div>
<div class="x" style="left:-71.1px;width:300px;text-align:center;transform:scaleX(0.860);transform-origin:50% 50%;top:358.8px;height:14.4px;line-height:14.4px;font-size:10.30px;color:#1a1a1a;-webkit-text-stroke:.25px #1a1a1a">17</div>
<div class="x" style="left:-71.1px;width:300px;text-align:center;transform:scaleX(0.860);transform-origin:50% 50%;top:372.8px;height:14.4px;line-height:14.4px;font-size:10.30px;color:#1a1a1a;-webkit-text-stroke:.25px #1a1a1a">18</div>
<div class="x" style="left:-71.1px;width:300px;text-align:center;transform:scaleX(0.860);transform-origin:50% 50%;top:386.8px;height:14.4px;line-height:14.4px;font-size:10.30px;color:#1a1a1a;-webkit-text-stroke:.25px #1a1a1a">19</div>
<div class="x" style="left:-71.1px;width:300px;text-align:center;transform:scaleX(0.860);transform-origin:50% 50%;top:400.8px;height:14.4px;line-height:14.4px;font-size:10.30px;color:#1a1a1a;-webkit-text-stroke:.25px #1a1a1a">20</div>
<div class="x" style="left:-71.1px;width:300px;text-align:center;transform:scaleX(0.860);transform-origin:50% 50%;top:414.8px;height:14.4px;line-height:14.4px;font-size:10.30px;color:#1a1a1a;-webkit-text-stroke:.25px #1a1a1a">21</div>
<div class="x" style="left:-71.1px;width:300px;text-align:center;transform:scaleX(0.860);transform-origin:50% 50%;top:428.8px;height:14.4px;line-height:14.4px;font-size:10.30px;color:#1a1a1a;-webkit-text-stroke:.25px #1a1a1a">22</div>
<div class="x" style="left:-71.1px;width:300px;text-align:center;transform:scaleX(0.860);transform-origin:50% 50%;top:442.8px;height:14.4px;line-height:14.4px;font-size:10.30px;color:#1a1a1a;-webkit-text-stroke:.25px #1a1a1a">23</div>
<div class="x" style="left:-71.1px;width:300px;text-align:center;transform:scaleX(0.860);transform-origin:50% 50%;top:456.8px;height:14.4px;line-height:14.4px;font-size:10.30px;color:#1a1a1a;-webkit-text-stroke:.25px #1a1a1a">24</div>
<div class="x" style="left:-71.1px;width:300px;text-align:center;transform:scaleX(0.860);transform-origin:50% 50%;top:470.8px;height:14.4px;line-height:14.4px;font-size:10.30px;color:#1a1a1a;-webkit-text-stroke:.25px #1a1a1a">25</div>
<div class="x" style="left:-71.1px;width:300px;text-align:center;transform:scaleX(0.860);transform-origin:50% 50%;top:484.8px;height:14.4px;line-height:14.4px;font-size:10.30px;color:#1a1a1a;-webkit-text-stroke:.25px #1a1a1a">26</div>
<div class="x" style="left:-71.1px;width:300px;text-align:center;transform:scaleX(0.860);transform-origin:50% 50%;top:498.8px;height:14.4px;line-height:14.4px;font-size:10.30px;color:#1a1a1a;-webkit-text-stroke:.25px #1a1a1a">27</div>
<div class="x" style="left:-71.1px;width:300px;text-align:center;transform:scaleX(0.860);transform-origin:50% 50%;top:512.8px;height:14.4px;line-height:14.4px;font-size:10.30px;color:#1a1a1a;-webkit-text-stroke:.25px #1a1a1a">28</div>
<div class="x" style="left:-71.1px;width:300px;text-align:center;transform:scaleX(0.860);transform-origin:50% 50%;top:526.8px;height:14.4px;line-height:14.4px;font-size:10.30px;color:#1a1a1a;-webkit-text-stroke:.25px #1a1a1a">29</div>
<div class="x" style="left:-71.1px;width:300px;text-align:center;transform:scaleX(0.860);transform-origin:50% 50%;top:540.8px;height:14.4px;line-height:14.4px;font-size:10.30px;color:#1a1a1a;-webkit-text-stroke:.25px #1a1a1a">30</div>
<div class="x" style="left:-71.1px;width:300px;text-align:center;transform:scaleX(0.860);transform-origin:50% 50%;top:554.8px;height:14.4px;line-height:14.4px;font-size:10.30px;color:#1a1a1a;-webkit-text-stroke:.25px #1a1a1a">31</div>
<div class="x" style="left:-71.1px;width:300px;text-align:center;transform:scaleX(0.860);transform-origin:50% 50%;top:568.8px;height:14.4px;line-height:14.4px;font-size:10.30px;color:#1a1a1a;-webkit-text-stroke:.25px #1a1a1a">32</div>
<div class="x" style="left:-71.1px;width:300px;text-align:center;transform:scaleX(0.860);transform-origin:50% 50%;top:582.8px;height:14.4px;line-height:14.4px;font-size:10.30px;color:#1a1a1a;-webkit-text-stroke:.25px #1a1a1a">33</div>
<div class="x" style="left:160.8px;top:133.4px;height:15.4px;line-height:15.4px;font-size:11.00px;color:#222;">x1</div>
<div class="x" style="left:227.7px;top:133.4px;height:15.4px;line-height:15.4px;font-size:11.00px;color:#222;">x2</div>
<div class="x" style="left:294.5px;top:133.4px;height:15.4px;line-height:15.4px;font-size:11.00px;color:#222;">x3</div>
<div class="x" style="left:428.1px;top:133.4px;height:15.4px;line-height:15.4px;font-size:11.00px;color:#222;">MAX</div>
<div class="x" style="left:-76.0px;width:300px;text-align:right;top:147.4px;height:15.4px;line-height:15.4px;font-size:11.00px;color:#222;">0</div>
<div class="x" style="left:-9.2px;width:300px;text-align:right;top:147.4px;height:15.4px;line-height:15.4px;font-size:11.00px;color:#222;">0</div>
<div class="x" style="left:57.6px;width:300px;text-align:right;top:147.4px;height:15.4px;line-height:15.4px;font-size:11.00px;color:#222;">0</div>
<div class="x" style="left:97.0px;top:161.4px;height:15.4px;line-height:15.4px;font-size:11.00px;color:#222;">I</div>
<div class="x" style="left:-76.0px;width:300px;text-align:right;top:161.4px;height:15.4px;line-height:15.4px;font-size:11.00px;color:#222;">4</div>
<div class="x" style="left:-9.2px;width:300px;text-align:right;top:161.4px;height:15.4px;line-height:15.4px;font-size:11.00px;color:#222;">0</div>
<div class="x" style="left:57.6px;width:300px;text-align:right;top:161.4px;height:15.4px;line-height:15.4px;font-size:11.00px;color:#222;">7</div>
<div class="x" style="left:124.4px;width:300px;text-align:right;top:161.4px;height:15.4px;line-height:15.4px;font-size:11.00px;color:#222;">0</div>
<div class="x" style="left:191.3px;width:300px;text-align:right;top:161.4px;height:15.4px;line-height:15.4px;font-size:11.00px;color:#222;">90</div>
<div class="x" style="left:94.0px;top:175.4px;height:15.4px;line-height:15.4px;font-size:11.00px;color:#222;">II</div>
<div class="x" style="left:-76.0px;width:300px;text-align:right;top:175.4px;height:15.4px;line-height:15.4px;font-size:11.00px;color:#222;">1</div>
<div class="x" style="left:-9.2px;width:300px;text-align:right;top:175.4px;height:15.4px;line-height:15.4px;font-size:11.00px;color:#222;">3</div>
<div class="x" style="left:57.6px;width:300px;text-align:right;top:175.4px;height:15.4px;line-height:15.4px;font-size:11.00px;color:#222;">9</div>
<div class="x" style="left:124.4px;width:300px;text-align:right;top:175.4px;height:15.4px;line-height:15.4px;font-size:11.00px;color:#222;">0</div>
<div class="x" style="left:191.3px;width:300px;text-align:right;top:175.4px;height:15.4px;line-height:15.4px;font-size:11.00px;color:#222;">60</div>
<div class="x" style="left:94.0px;top:189.4px;height:15.4px;line-height:15.4px;font-size:11.00px;color:#222;">III</div>
<div class="x" style="left:-76.0px;width:300px;text-align:right;top:189.4px;height:15.4px;line-height:15.4px;font-size:11.00px;color:#222;">6</div>
<div class="x" style="left:-9.2px;width:300px;text-align:right;top:189.4px;height:15.4px;line-height:15.4px;font-size:11.00px;color:#222;">0</div>
<div class="x" style="left:57.6px;width:300px;text-align:right;top:189.4px;height:15.4px;line-height:15.4px;font-size:11.00px;color:#222;">14</div>
<div class="x" style="left:124.4px;width:300px;text-align:right;top:189.4px;height:15.4px;line-height:15.4px;font-size:11.00px;color:#222;">0</div>
<div class="x" style="left:191.3px;width:300px;text-align:right;top:189.4px;height:15.4px;line-height:15.4px;font-size:11.00px;color:#222;">110</div>
<div class="x" style="left:94.0px;top:203.4px;height:15.4px;line-height:15.4px;font-size:11.00px;color:#222;">IV</div>
<div class="x" style="left:-76.0px;width:300px;text-align:right;top:203.4px;height:15.4px;line-height:15.4px;font-size:11.00px;color:#222;">4</div>
<div class="x" style="left:-9.2px;width:300px;text-align:right;top:203.4px;height:15.4px;line-height:15.4px;font-size:11.00px;color:#222;">10</div>
<div class="x" style="left:57.6px;width:300px;text-align:right;top:203.4px;height:15.4px;line-height:15.4px;font-size:11.00px;color:#222;">1</div>
<div class="x" style="left:124.4px;width:300px;text-align:right;top:203.4px;height:15.4px;line-height:15.4px;font-size:11.00px;color:#222;">0</div>
<div class="x" style="left:191.3px;width:300px;text-align:right;top:203.4px;height:15.4px;line-height:15.4px;font-size:11.00px;color:#222;">75</div>
<div class="x" style="left:94.0px;top:217.4px;height:15.4px;line-height:15.4px;font-size:11.00px;color:#222;">L</div>
<div class="x" style="left:-76.0px;width:300px;text-align:right;top:217.4px;height:15.4px;line-height:15.4px;font-size:11.00px;color:#222;">80</div>
<div class="x" style="left:-9.2px;width:300px;text-align:right;top:217.4px;height:15.4px;line-height:15.4px;font-size:11.00px;color:#222;">110</div>
<div class="x" style="left:57.6px;width:300px;text-align:right;top:217.4px;height:15.4px;line-height:15.4px;font-size:11.00px;color:#222;">95</div>
<div class="x" style="left:124.4px;width:300px;text-align:right;top:217.4px;height:15.4px;line-height:15.4px;font-size:11.00px;color:#222;">0</div>
<div style="left:1068.5px;top:118.0px;width:12.0px;height:478.0px;background:#f0f0f0"></div>
<div style="left:1068.5px;top:118.0px;width:12.0px;height:3.0px;background:#111"></div>
<div style="left:1068.5px;top:135.5px;width:11.5px;height:208.0px;background:#c6c6c6"></div>
<svg style="left:1069px;top:125px" width="11" height="8" viewBox="0 0 11 8"><path d="M2 6l3.500-3.500L9 6" fill="none" stroke="#333" stroke-width="1.300"/></svg>
<div style="left:64.0px;top:595.5px;width:1016.0px;height:14.0px;background:#f0f0f0"></div>
<svg style="left:64px;top:595px" width="300" height="14" viewBox="0 0 300 14"><rect x="2.5" y="1.500" width="12.500" height="11" fill="#f6f6f6" stroke="#9a9a9a" stroke-width=".8"/><rect x="16.5" y="1.500" width="12.500" height="11" fill="#f6f6f6" stroke="#9a9a9a" stroke-width=".8"/><rect x="30.5" y="1.500" width="12.500" height="11" fill="#f6f6f6" stroke="#9a9a9a" stroke-width=".8"/><rect x="44.5" y="1.500" width="12.500" height="11" fill="#f6f6f6" stroke="#9a9a9a" stroke-width=".8"/><path d="M7.5 7l4-3.300v6.600zM5.5 3.700h1.300v6.600h-1.300z" fill="#111"/><path d="M20.5 7l4.200-3.300v6.600z" fill="#111"/><path d="M39.5 7l-4.200-3.300v6.600z" fill="#111"/><path d="M52.0 7l-4-3.300v6.600zM52.7 3.700h1.300v6.600h-1.300z" fill="#111"/><path d="M58.500 .8H220V13H58.500z" fill="#f0f0f0"/><path d="M60.500 .8L65 12.200H97.500L102 .8" fill="#fff" stroke="#444" stroke-width=".9"/><path d="M102 .8L97.500 12.200M100 12.200H134.500L139 .8M137 12.200H171L175.500 .8" fill="none" stroke="#555" stroke-width=".9"/><path d="M58 .8H218.500V12.500" fill="none" stroke="#777" stroke-width=".9"/><path d="M220.500 .5V13.500M223.500 .5V13.500" stroke="#666" stroke-width="1"/><path d="M233 4l-3.200 3 3.200 3" fill="none" stroke="#222" stroke-width="1.400"/></svg>
<div class="x" style="left:-6.2px;width:300px;text-align:center;transform:scaleX(0.790);transform-origin:50% 50%;top:593.5px;height:15.4px;line-height:15.4px;font-size:11.00px;color:#111;font-weight:bold;">Sheet1</div>
<div class="x" style="left:31.0px;width:300px;text-align:center;transform:scaleX(0.803);transform-origin:50% 50%;top:593.5px;height:15.4px;line-height:15.4px;font-size:11.00px;color:#222;">Sheet2</div>
<div class="x" style="left:69.1px;width:300px;text-align:center;transform:scaleX(0.832);transform-origin:50% 50%;top:593.5px;height:15.4px;line-height:15.4px;font-size:11.00px;color:#222;">Sheet3</div>
<div style="left:301.0px;top:596.5px;width:349.5px;height:11.5px;background:#c9c9c9"></div>
<div style="left:64.0px;top:609.0px;width:1056.0px;height:18.0px;background:#f0f0f0"></div>
<svg class="t" style="left:71.5px;top:610.5px" width="47.0" height="16.2" viewBox="0 0 47.0 16.2"><text xml:space="preserve" style="white-space:pre" x="1.0" y="11.9" font-size="10.58" fill="#333" textLength="19.5" lengthAdjust="spacingAndGlyphs">シート</text><text xml:space="preserve" style="white-space:pre" x="20.5" y="11.9" font-size="10.58" fill="#333" textLength="23.5" lengthAdjust="spacingAndGlyphs"> 1 / 3</text></svg>
<div style="left:333.5px;top:611.5px;width:1.0px;height:14.0px;background:#b8b8b8"></div>
<div style="left:576.0px;top:611.5px;width:1.0px;height:14.0px;background:#b8b8b8"></div>
<div style="left:620.0px;top:611.5px;width:1.0px;height:14.0px;background:#b8b8b8"></div>
<div style="left:650.5px;top:611.5px;width:1.0px;height:14.0px;background:#b8b8b8"></div>
<div style="left:664.0px;top:611.5px;width:1.0px;height:14.0px;background:#b8b8b8"></div>
<div style="left:688.0px;top:611.5px;width:1.0px;height:14.0px;background:#b8b8b8"></div>
<svg class="t" style="left:337.0px;top:610.7px" width="24.0" height="15.8" viewBox="0 0 24.0 15.8"><text xml:space="preserve" style="white-space:pre" x="1.0" y="11.6" font-size="10.3" fill="#333" textLength="19.5" lengthAdjust="spacingAndGlyphs">標準</text></svg>
<svg class="t" style="left:623.0px;top:610.7px" width="24.0" height="15.8" viewBox="0 0 24.0 15.8"><text xml:space="preserve" style="white-space:pre" x="1.0" y="11.6" font-size="10.3" fill="#333" textLength="19.5" lengthAdjust="spacingAndGlyphs">標準</text></svg>
<div class="x" style="left:506.0px;width:300px;text-align:center;top:612.3px;height:15.4px;line-height:15.4px;font-size:11.00px;color:#333;">*</div>
<div style="left:64.0px;top:627.0px;width:1056.0px;height:33.0px;background:#1e2f3f"></div>
<div style="left:64.0px;top:627.0px;width:40.0px;height:33.0px;background:#1f3645"></div>
<svg style="left:77px;top:636px" width="15" height="15" viewBox="0 0 15 15"><path d="M0 2.200L6.300 1.300V7H0zM7.200 1.200L14.500 .1V7H7.200zM0 7.900H6.300V13.600L0 12.700zM7.200 7.900H14.500V14.800L7.200 13.700z" fill="#fff"/></svg>
<div style="left:104.0px;top:627.0px;width:283.5px;height:33.0px;background:#f3f3f3;border-top:1px solid #dcdcdc"></div>
<svg style="left:111px;top:636px" width="16" height="16" viewBox="0 0 16 16"><circle cx="9.500" cy="6.200" r="4.300" fill="none" stroke="#333" stroke-width="1.300"/><path d="M6.500 9.300L1.500 14.500" stroke="#333" stroke-width="1.400"/></svg>
<svg class="t" style="left:135.0px;top:634.4px" width="98.0" height="18.3" viewBox="0 0 98.0 18.3"><text xml:space="preserve" style="white-space:pre" x="1.0" y="13.4" font-size="11.9" fill="#444" textLength="92.5" lengthAdjust="spacingAndGlyphs">ここに入力して検索</text></svg>
<svg style="left:399px;top:635px" width="70" height="18" viewBox="0 0 70 18"><circle cx="8" cy="9" r="5.300" fill="none" stroke="#fff" stroke-width="1.700"/><g fill="none" stroke="#fff" stroke-width="1"><rect x="42.500" y="5.500" width="7" height="7"/><path d="M41.500 2.500h9M41.500 15.500h9M53.500 2.500v2.500M53.500 7.500v3M53.500 13v2.500"/></g></svg>
<div style="left:671.0px;top:627.0px;width:38.0px;height:33.0px;background:#495763"></div>
<div style="left:474.0px;top:658.0px;width:31.0px;height:2.0px;background:#8fc3ea"></div>
<div style="left:554.0px;top:658.0px;width:32.0px;height:2.0px;background:#8fc3ea"></div>
<div style="left:593.0px;top:658.0px;width:33.0px;height:2.0px;background:#8fc3ea"></div>
<div style="left:671.0px;top:658.0px;width:40.0px;height:2.0px;background:#8fc3ea"></div>
<div style="left:715.0px;top:658.0px;width:33.0px;height:2.0px;background:#8fc3ea"></div>
<svg style="left:478.8px;top:632.3px" width="21.00" height="21.00" viewBox="0 0 21 21"><circle cx="10" cy="10" r="9.300" fill="#e8453c"/><path d="M10 10L1.900 5.400A9.300 9.300 0 0 0 5.400 18.100z" fill="#34a853"/><path d="M10 10L5.400 18.100A9.300 9.300 0 0 0 18.100 5.400H10z" fill="#fbbc05"/><path d="M10 10L18.100 5.400A9.300 9.300 0 0 0 1.900 5.400z" fill="#ea4335"/><path d="M1.900 5.400A9.300 9.300 0 0 0 5.400 18.100L10 10z" fill="#34a853"/><circle cx="10" cy="10" r="4.300" fill="#fff"/><circle cx="10" cy="10" r="3.400" fill="#4285f4"/><circle cx="15" cy="15.500" r="5" fill="#3c8a3a"/><path d="M12.500 14h5M12.500 16h5M15 13v5" stroke="#e8f5e0" stroke-width=".9"/></svg>
<svg style="left:519.0px;top:632.8px" width="20.00" height="20.00" viewBox="0 0 20 20"><circle cx="10" cy="10" r="9.300" fill="#1b79d0"/><path d="M1 8Q3 1 10 .7t9 7q0 3.500-4 3.500-2.500 0-2-2Q13 6 10 6 5 6 3 10.500z" fill="#3ad07a"/><path d="M3 10.500Q5 6 10 6q3 0 3 3-.500 2 2 2-1.500 4-6 4T3 10.500z" fill="#0c57a8"/><path d="M6 11q0 5 5.500 7.500Q5 19 2 14z" fill="#2aa8e8"/></svg>
<svg style="left:559.3px;top:633.8px" width="18.00" height="18.00" viewBox="0 0 18 18"><rect x="1.500" y="2" width="15" height="14" fill="#5a9bd8" stroke="#c9dff4" stroke-width="1.400"/><circle cx="9" cy="9" r="5.200" fill="#f28a1e" stroke="#fbd7a8" stroke-width=".8"/><path d="M7.300 6.200v5.600L12 9z" fill="#fff"/></svg>
<svg style="left:600.0px;top:633.8px" width="20.00" height="18.00" viewBox="0 0 20 18"><path d="M1 3h7l1.500 2H19V16H1z" fill="#f0b429"/><path d="M1 6.500H19V16H1z" fill="#ffd75e"/><path d="M6 11.500h8V16H6z" fill="#3d8fd8"/><path d="M8 13.500h4v2.500H8z" fill="#ffd75e"/></svg>
<svg style="left:639.8px;top:635.3px" width="20.00" height="15.00" viewBox="0 0 20 15"><rect x=".5" y=".5" width="19" height="14" fill="#0c0c0c" stroke="#8a8a8a" stroke-width=".9"/><rect x="1" y="1" width="18" height="2.300" fill="#9a9a9a"/><path d="M3 6.500h3.500M8 8h3" stroke="#e8e8e8" stroke-width="1"/></svg>
<svg style="left:680.8px;top:632.3px" width="20.00" height="21.00" viewBox="0 0 20 21"><path d="M4 3.500H13l3.500 3.500V19.500H4z" fill="#f4f7ea" stroke="#7a8a5a" stroke-width=".8"/><path d="M3.500 4h4v3H6V19.500H3.500z" fill="#16222b"/><path d="M7 9.500H15V18H7z" fill="#b7d84b"/><path d="M7 12.300h8M7 15.200h8M9.700 9.500V18M12.400 9.500V18" stroke="#f4f7ea" stroke-width=".9"/><path d="M2 3q3-3 6-1.500T14 1" stroke="#e8ecef" stroke-width="1.400" fill="none"/><path d="M3 5.500q3-3 6-1.500t5-.5" stroke="#c8d0d6" stroke-width="1" fill="none"/></svg>
<svg style="left:721.3px;top:632.8px" width="21.00" height="20.00" viewBox="0 0 21 20"><path d="M2 12Q1 5 8 3.500t9.500 3.500T14 14.500q-2-.5-2.500 1.500T7 18 2 12z" fill="#e8ecf2" stroke="#8a98aa" stroke-width=".8"/><circle cx="6" cy="8" r="1.600" fill="#e8453c"/><circle cx="10" cy="6.300" r="1.600" fill="#f4c020"/><circle cx="14" cy="8" r="1.600" fill="#34a853"/><circle cx="5.500" cy="12.500" r="1.600" fill="#3a7fd8"/><path d="M11 14L19 1.500l1 .7L13.500 15z" fill="#c98a4a" stroke="#7a4a1a" stroke-width=".5"/></svg>
<div class="x" style="left:892.0px;width:300px;text-align:center;transform:scaleX(0.977);transform-origin:50% 50%;top:645.2px;height:12.6px;line-height:12.6px;font-size:9.00px;color:#e8e8e8;">2021/04/17</div>
<div style="left:1082.0px;top:91.0px;width:38.0px;height:518.0px;background:#f1f1f1"></div>
<div style="left:1087.0px;top:91.0px;width:1.0px;height:518.0px;background:#cfcfcf"></div>
<div style="left:1118.5px;top:91.0px;width:1.5px;height:518.0px;background:#d8d8d8"></div>
<svg style="left:1100.2px;top:102.5px" width="8.00" height="8.00" viewBox="0 0 8 8"><path d="M0 .8h4.500M0 2.400h4.500M0 4h4.500" stroke="#8a8a8a" stroke-width=".9"/><path d="M3 5.300h4.400L5.200 7.800z" fill="#111"/></svg>
<div style="left:1090.0px;top:125.0px;width:27.0px;height:26.0px;background:#f7f7f7;border:1px solid #bdbdbd;border-radius:3.500px"></div>
<svg style="left:1093.7px;top:127.0px" width="20.00" height="21.00" viewBox="0 0 20 21"><path d="M3 3l4-2 4 2v4.500l-4 2-4-2z" fill="#3aa0e6" stroke="#1c6db2" stroke-width=".6"/><path d="M3 3l4 2 4-2M7 5v4.500" stroke="#bfe3ff" stroke-width=".7" fill="none"/><path d="M10.500 6l4-2 4 2v4.500l-4 2-4-2z" fill="#78cc3f" stroke="#3f8f16" stroke-width=".6"/><path d="M10.500 6l4 2 4-2M14.500 8v4.500" stroke="#d6f5b8" stroke-width=".7" fill="none"/><path d="M2 10.500l4-2 4 2V15l-4 2-4-2z" fill="#78cc3f" stroke="#3f8f16" stroke-width=".6"/><path d="M2 10.500l4 2 4-2M6 12.500V17" stroke="#d6f5b8" stroke-width=".7" fill="none"/><path d="M9.500 12.500l4-2 4 2V17l-4 2-4-2z" fill="#3aa0e6" stroke="#1c6db2" stroke-width=".6"/><path d="M9.500 12.500l4 2 4-2M13.500 14.500V19" stroke="#bfe3ff" stroke-width=".7" fill="none"/><ellipse cx="10" cy="19.500" rx="8" ry="1" fill="#bbb" opacity=".6"/></svg>
<svg style="left:1093.7px;top:156.0px" width="20.00" height="20.00" viewBox="0 0 20 20"><circle cx="8" cy="3" r="2" fill="#e85fb0"/><circle cx="3.500" cy="6" r="2.200" fill="#f08a24"/><path d="M15 1l.9 1.900 2 .3-1.500 1.400.4 2L15 5.700l-1.800.9.400-2L12.100 3.200l2-.3z" fill="#f4d21f"/><path d="M5 5.500l9 1.500-1 9.500H4z" fill="#2c3e50"/><path d="M6 15.500l6.500-8 2 8.500z" fill="#2f8fe0"/><circle cx="14.500" cy="11" r="2.300" fill="#6cc24a"/><circle cx="4" cy="11.500" r="1.800" fill="#e8472e"/><ellipse cx="10" cy="18.500" rx="7.500" ry="1" fill="#aaa" opacity=".6"/></svg>
<svg style="left:1093.7px;top:186.0px" width="20.00" height="20.00" viewBox="0 0 20 20"><g transform="rotate(-18 10 10)"><rect x="3" y="4" width="14" height="11" fill="#fafafa" stroke="#a8b0b8" stroke-width=".8"/><rect x="4.500" y="5.500" width="11" height="8" fill="#5aaef0"/><path d="M4.500 13.500l3.500-4 2.500 2.500 2-1.500 3 3z" fill="#6cc24a"/><path d="M8 9.500l2-2 1.500 2.500z" fill="#fff"/></g><ellipse cx="10" cy="18.500" rx="7.500" ry="1" fill="#aaa" opacity=".6"/></svg>
<svg style="left:1093.7px;top:215.0px" width="20.00" height="20.00" viewBox="0 0 20 20"><circle cx="10" cy="10.500" r="7.800" fill="#fdf6e6" stroke="#f09a1a" stroke-width="2"/><path d="M13.500 6.500l-2 5-3-2z" fill="#e03a2e"/><path d="M6.500 14.500l2-5 3 2z" fill="#3a7fd8"/><path d="M9 1h2v2.500H9z" fill="#555"/></svg>
<svg style="left:1093.7px;top:245.0px" width="20.00" height="20.00" viewBox="0 0 20 20"><path d="M5 1.500h8.500l4 4V18.500H5z" fill="#eaf4fd" stroke="#4a96d8" stroke-width="1"/><path d="M13.500 1.500v4h4" fill="#cfe6fa" stroke="#4a96d8" stroke-width=".8"/><text x="3" y="15" font-size="15" font-style="italic" font-weight="bold" font-family="Liberation Serif" fill="#1c2a44" style="font-family:'Liberation Serif',serif">f</text><path d="M9.500 10.500l5 5.500m0-5.500l-5 5.500" stroke="#1c2a44" stroke-width="1.600"/></svg>
<div style="left:1088.0px;top:449.3px;width:31.0px;height:1.3px;background:#7a7a7a"></div>
<div style="left:1087.3px;top:450.0px;width:1.2px;height:159.0px;background:#8a8a8a"></div>
<div style="left:1094.4px;top:459.2px;width:20.3px;height:17.2px;background:#e1e1e1;border:1px solid #bdbdbd"></div>
<div class="x" style="left:952.3px;width:300px;text-align:center;top:457.9px;height:18.2px;line-height:18.2px;font-size:13.00px;color:#222;font-family:'Liberation Serif',serif;font-style:italic;font-weight:bold">f</div>
<div class="x" style="left:958.0px;width:300px;text-align:center;top:463.9px;height:11.2px;line-height:11.2px;font-size:8.00px;color:#222;font-weight:bold;">x</div>
<div style="left:1094.2px;top:481.1px;width:26.0px;height:13.0px;background:#1080d8"></div>
<div class="x" style="left:1095.6px;transform:scaleX(1.078);transform-origin:0 50%;top:481.6px;height:12.3px;line-height:12.3px;font-size:8.80px;color:#fff;">SUMIF</div>
</div>
<div id="shot2" style="left:0;top:0;width:1280px;height:720px;clip-path:inset(0 160.600px 60.500px 64px)">
<div style="left:140.5px;top:251.5px;width:379.5px;height:263.5px;background:#f0f0f0;border:1px solid #6e6e6e;box-shadow:0 3px 14px rgba(0,0,0,.35),0 0 4px rgba(0,0,0,.2)"></div>
<div style="left:141.5px;top:252.5px;width:377.5px;height:20.3px;background:#fff"></div>
<svg class="t" style="left:143.4px;top:253.1px" width="39.3" height="17.2" viewBox="0 0 39.3 17.2"><text xml:space="preserve" style="white-space:pre" x="1.0" y="12.7" font-size="11.27" fill="#111" textLength="34.0" lengthAdjust="spacingAndGlyphs">オプション</text></svg>
<svg style="left:502px;top:257.300px" width="10" height="10" viewBox="0 0 10 10"><path d="M.8 .8l8.400 8.400M9.200 .8L.8 9.200" stroke="#222" stroke-width="1.100"/></svg>
<svg class="t" style="left:151.7px;top:282.8px" width="76.9" height="17.2" viewBox="0 0 76.9 17.2"><text xml:space="preserve" style="white-space:pre" x="1.0" y="12.7" font-size="11.27" fill="#1a1a1a" textLength="60.9" lengthAdjust="spacingAndGlyphs">ソルバーエンジン</text><text xml:space="preserve" style="white-space:pre" x="61.9" y="12.7" font-size="11.27" fill="#1a1a1a" textLength="3.0" lengthAdjust="spacingAndGlyphs">(</text><text xml:space="preserve" style="white-space:pre" x="64.9" y="12.7" font-size="11.27" fill="#1a1a1a" textLength="6.0" lengthAdjust="spacingAndGlyphs">A</text><rect x="64.9" y="14.0" width="6.0" height="0.9" fill="#1a1a1a"/><text xml:space="preserve" style="white-space:pre" x="70.9" y="12.7" font-size="11.27" fill="#1a1a1a" textLength="3.0" lengthAdjust="spacingAndGlyphs">)</text></svg>
<div style="left:257.0px;top:282.2px;width:252.3px;height:18.6px;background:#fff;border:1px solid #adadad"></div>
<div class="x" style="left:260.3px;transform:scaleX(0.854);transform-origin:0 50%;top:284.1px;height:15.8px;line-height:15.8px;font-size:11.30px;color:#111;">OpenOffice Linear Solver</div>
<div style="left:494.5px;top:284.0px;width:13.5px;height:15.5px;background:#e6e6e6;border:1px solid #c2c2c2"></div>
<svg style="left:497.0px;top:289.5px" width="9" height="6" viewBox="0 0 9 6"><path d="M1 1l3.500 3.500L8 1" fill="none" stroke="#444" stroke-width="1.100"/></svg>
<svg class="t" style="left:151.7px;top:307.9px" width="37.6" height="17.2" viewBox="0 0 37.6 17.2"><text xml:space="preserve" style="white-space:pre" x="1.0" y="12.7" font-size="11.27" fill="#1a1a1a" textLength="19.1" lengthAdjust="spacingAndGlyphs">設定</text><text xml:space="preserve" style="white-space:pre" x="20.1" y="12.7" font-size="11.27" fill="#1a1a1a" textLength="3.0" lengthAdjust="spacingAndGlyphs">(</text><text xml:space="preserve" style="white-space:pre" x="23.1" y="12.7" font-size="11.27" fill="#1a1a1a" textLength="6.0" lengthAdjust="spacingAndGlyphs">B</text><rect x="23.1" y="14.0" width="6.0" height="0.9" fill="#1a1a1a"/><text xml:space="preserve" style="white-space:pre" x="29.1" y="12.7" font-size="11.27" fill="#1a1a1a" textLength="5.5" lengthAdjust="spacingAndGlyphs">):</text></svg>
<div style="left:152.0px;top:327.5px;width:357.5px;height:104.0px;background:#fff;border:1px solid #828790"></div>
<div style="left:153.5px;top:366.8px;width:353.0px;height:11.4px;background:#0078d7"></div>
<svg class="t" style="left:167.6px;top:327.2px" width="94.0" height="16.2" viewBox="0 0 94.0 16.2"><text xml:space="preserve" style="white-space:pre" x="1.0" y="11.9" font-size="10.58" fill="#111" textLength="61.3" lengthAdjust="spacingAndGlyphs">イプシロンレベル</text><text xml:space="preserve" style="white-space:pre" x="62.3" y="11.9" font-size="10.58" fill="#111" textLength="28.7" lengthAdjust="spacingAndGlyphs"> (0-3): </text></svg>
<div class="x" style="left:258.6px;transform:scaleX(0.863);transform-origin:0 50%;top:329.0px;height:14.0px;line-height:14.0px;font-size:10.00px;color:#111;font-weight:bold;">0</div>
<svg class="t" style="left:167.6px;top:339.6px" width="102.0" height="16.2" viewBox="0 0 102.0 16.2"><text xml:space="preserve" style="white-space:pre" x="1.0" y="11.9" font-size="10.58" fill="#111" textLength="96.5" lengthAdjust="spacingAndGlyphs">分岐と境界の深さを制限</text></svg>
<svg style="left:154.500px;top:342.6px" width="11" height="11" viewBox="0 0 11 11"><rect x=".7" y=".7" width="9.600" height="9.600" fill="#fff" stroke="#333" stroke-width="1"/></svg>
<svg class="t" style="left:167.6px;top:352.0px" width="77.0" height="16.2" viewBox="0 0 77.0 16.2"><text xml:space="preserve" style="white-space:pre" x="1.0" y="11.9" font-size="10.58" fill="#111" textLength="71.5" lengthAdjust="spacingAndGlyphs">変数を整数と想定</text></svg>
<svg style="left:154.500px;top:355.0px" width="11" height="11" viewBox="0 0 11 11"><rect x=".7" y=".7" width="9.600" height="9.600" fill="#fff" stroke="#333" stroke-width="1"/><path d="M2.500 5.500l2.200 2.300L8.600 3" fill="none" stroke="#222" stroke-width="1.200"/></svg>
<svg class="t" style="left:167.6px;top:364.4px" width="118.5" height="16.2" viewBox="0 0 118.5 16.2"><text xml:space="preserve" style="white-space:pre" x="1.0" y="11.9" font-size="10.58" fill="#fff" textLength="113.0" lengthAdjust="spacingAndGlyphs">変数を負の値ではないと想定</text></svg>
<svg style="left:154.500px;top:367.4px" width="11" height="11" viewBox="0 0 11 11"><rect x=".7" y=".7" width="9.600" height="9.600" fill="#fff" stroke="#333" stroke-width="1"/><path d="M2.500 5.500l2.200 2.300L8.600 3" fill="none" stroke="#222" stroke-width="1.200"/></svg>
<svg class="t" style="left:167.6px;top:376.8px" width="94.7" height="16.2" viewBox="0 0 94.7 16.2"><text xml:space="preserve" style="white-space:pre" x="1.0" y="11.9" font-size="10.58" fill="#111" textLength="66.6" lengthAdjust="spacingAndGlyphs">時間制限の解決</text><text xml:space="preserve" style="white-space:pre" x="67.6" y="11.9" font-size="10.58" fill="#111" textLength="5.9" lengthAdjust="spacingAndGlyphs"> (</text><text xml:space="preserve" style="white-space:pre" x="73.5" y="11.9" font-size="10.58" fill="#111" textLength="9.5" lengthAdjust="spacingAndGlyphs">秒</text><text xml:space="preserve" style="white-space:pre" x="83.0" y="11.9" font-size="10.58" fill="#111" textLength="8.7" lengthAdjust="spacingAndGlyphs">): </text></svg>
<div class="x" style="left:259.3px;transform:scaleX(0.863);transform-origin:0 50%;top:378.6px;height:14.0px;line-height:14.0px;font-size:10.00px;color:#111;font-weight:bold;">100</div>
<div style="left:153.0px;top:442.0px;width:84.7px;height:18.7px;background:#cfcfcf;border:1px solid #c8c8c8"></div>
<svg class="t" style="left:175.3px;top:442.6px" width="42.0" height="17.2" viewBox="0 0 42.0 17.2"><text xml:space="preserve" style="white-space:pre" x="1.0" y="12.7" font-size="11.27" fill="#8a8a8a" textLength="18.0" lengthAdjust="spacingAndGlyphs">編集</text><text xml:space="preserve" style="white-space:pre" x="19.0" y="12.7" font-size="11.27" fill="#8a8a8a" textLength="3.0" lengthAdjust="spacingAndGlyphs">(</text><text xml:space="preserve" style="white-space:pre" x="22.0" y="12.7" font-size="11.27" fill="#8a8a8a" textLength="6.5" lengthAdjust="spacingAndGlyphs">C</text><rect x="22.0" y="14.0" width="6.5" height="0.9" fill="#8a8a8a"/><text xml:space="preserve" style="white-space:pre" x="28.5" y="12.7" font-size="11.27" fill="#8a8a8a" textLength="10.5" lengthAdjust="spacingAndGlyphs">)...</text></svg>
<div style="left:141.5px;top:471.0px;width:377.5px;height:1.0px;background:#d4d4d4"></div>
<div style="left:141.5px;top:472.0px;width:377.5px;height:1.0px;background:#fff"></div>
<div style="left:153.0px;top:484.0px;width:84.7px;height:19.7px;background:#e1e1e1;border:1px solid #adadad"></div>
<svg class="t" style="left:175.3px;top:485.1px" width="42.0" height="17.2" viewBox="0 0 42.0 17.2"><text xml:space="preserve" style="white-space:pre" x="1.0" y="12.7" font-size="11.27" fill="#1a1a1a" textLength="25.5" lengthAdjust="spacingAndGlyphs">ヘルプ</text><text xml:space="preserve" style="white-space:pre" x="26.5" y="12.7" font-size="11.27" fill="#1a1a1a" textLength="3.0" lengthAdjust="spacingAndGlyphs">(</text><text xml:space="preserve" style="white-space:pre" x="29.5" y="12.7" font-size="11.27" fill="#1a1a1a" textLength="6.5" lengthAdjust="spacingAndGlyphs">H</text><rect x="29.5" y="14.0" width="6.5" height="0.9" fill="#1a1a1a"/><text xml:space="preserve" style="white-space:pre" x="36.0" y="12.7" font-size="11.27" fill="#1a1a1a" textLength="3.0" lengthAdjust="spacingAndGlyphs">)</text></svg>
<div style="left:326.4px;top:484.0px;width:84.4px;height:19.7px;background:#e1e1e1;border:2px solid #0078d7"></div>
<div class="x" style="left:218.4px;width:300px;text-align:center;transform:scaleX(0.805);transform-origin:50% 50%;top:486.3px;height:15.4px;line-height:15.4px;font-size:11.00px;color:#111;">OK</div>
<div style="left:423.3px;top:484.0px;width:84.7px;height:19.7px;background:#e1e1e1;border:1px solid #adadad"></div>
<svg class="t" style="left:445.1px;top:485.1px" width="43.0" height="17.2" viewBox="0 0 43.0 17.2"><text xml:space="preserve" style="white-space:pre" x="1.0" y="12.7" font-size="11.27" fill="#1a1a1a" textLength="37.5" lengthAdjust="spacingAndGlyphs">キャンセル</text></svg>
<div style="left:548.0px;top:135.0px;width:399.0px;height:346.5px;background:#f0f0f0;border:1px solid #b9b9b9;box-shadow:0 3px 14px rgba(0,0,0,.3),0 0 4px rgba(0,0,0,.15)"></div>
<div style="left:549.0px;top:136.0px;width:397.0px;height:21.5px;background:#fff"></div>
<svg class="t" style="left:551.0px;top:137.2px" width="31.0" height="17.2" viewBox="0 0 31.0 17.2"><text xml:space="preserve" style="white-space:pre" x="1.0" y="12.7" font-size="11.27" fill="#9a9a9a" textLength="25.5" lengthAdjust="spacingAndGlyphs">ソルバー</text></svg>
<svg class="t" style="left:558.5px;top:166.7px" width="68.5" height="17.2" viewBox="0 0 68.5 17.2"><text xml:space="preserve" style="white-space:pre" x="1.0" y="12.7" font-size="11.27" fill="#1a1a1a" textLength="52.5" lengthAdjust="spacingAndGlyphs">ターゲットセル</text><text xml:space="preserve" style="white-space:pre" x="53.5" y="12.7" font-size="11.27" fill="#1a1a1a" textLength="3.0" lengthAdjust="spacingAndGlyphs">(</text><text xml:space="preserve" style="white-space:pre" x="56.5" y="12.7" font-size="11.27" fill="#1a1a1a" textLength="6.0" lengthAdjust="spacingAndGlyphs">A</text><rect x="56.5" y="14.0" width="6.0" height="0.9" fill="#1a1a1a"/><text xml:space="preserve" style="white-space:pre" x="62.5" y="12.7" font-size="11.27" fill="#1a1a1a" textLength="3.0" lengthAdjust="spacingAndGlyphs">)</text></svg>
<div style="left:664.4px;top:166.0px;width:225.0px;height:18.6px;background:#fff;border:1px solid #adadad"></div>
<div class="x" style="left:668.3px;transform:scaleX(0.795);transform-origin:0 50%;top:168.5px;height:14.7px;line-height:14.7px;font-size:10.50px;color:#111;">$E$7</div>
<svg class="t" style="left:558.5px;top:190.9px" width="60.0" height="17.2" viewBox="0 0 60.0 17.2"><text xml:space="preserve" style="white-space:pre" x="1.0" y="12.7" font-size="11.27" fill="#1a1a1a" textLength="54.5" lengthAdjust="spacingAndGlyphs">結果の最適化</text></svg>
<svg style="left:663.5px;top:193.0px" width="13" height="13" viewBox="0 0 13 13"><circle cx="6.500" cy="6.500" r="5.500" fill="#fff" stroke="#333" stroke-width="1"/><circle cx="6.500" cy="6.500" r="2.900" fill="#222"/></svg>
<svg class="t" style="left:677.6px;top:190.7px" width="44.5" height="17.2" viewBox="0 0 44.5 17.2"><text xml:space="preserve" style="white-space:pre" x="1.0" y="12.7" font-size="11.27" fill="#1a1a1a" textLength="28.5" lengthAdjust="spacingAndGlyphs">最大値</text><text xml:space="preserve" style="white-space:pre" x="29.5" y="12.7" font-size="11.27" fill="#1a1a1a" textLength="3.0" lengthAdjust="spacingAndGlyphs">(</text><text xml:space="preserve" style="white-space:pre" x="32.5" y="12.7" font-size="11.27" fill="#1a1a1a" textLength="6.0" lengthAdjust="spacingAndGlyphs">B</text><rect x="32.5" y="14.0" width="6.0" height="0.9" fill="#1a1a1a"/><text xml:space="preserve" style="white-space:pre" x="38.5" y="12.7" font-size="11.27" fill="#1a1a1a" textLength="3.0" lengthAdjust="spacingAndGlyphs">)</text></svg>
<svg style="left:663.5px;top:214.3px" width="13" height="13" viewBox="0 0 13 13"><circle cx="6.500" cy="6.500" r="5.500" fill="#fff" stroke="#333" stroke-width="1"/></svg>
<svg class="t" style="left:677.6px;top:211.9px" width="44.5" height="17.2" viewBox="0 0 44.5 17.2"><text xml:space="preserve" style="white-space:pre" x="1.0" y="12.7" font-size="11.27" fill="#1a1a1a" textLength="28.0" lengthAdjust="spacingAndGlyphs">最小値</text><text xml:space="preserve" style="white-space:pre" x="29.0" y="12.7" font-size="11.27" fill="#1a1a1a" textLength="3.0" lengthAdjust="spacingAndGlyphs">(</text><text xml:space="preserve" style="white-space:pre" x="32.0" y="12.7" font-size="11.27" fill="#1a1a1a" textLength="6.5" lengthAdjust="spacingAndGlyphs">C</text><rect x="32.0" y="14.0" width="6.5" height="0.9" fill="#1a1a1a"/><text xml:space="preserve" style="white-space:pre" x="38.5" y="12.7" font-size="11.27" fill="#1a1a1a" textLength="3.0" lengthAdjust="spacingAndGlyphs">)</text></svg>
<svg style="left:663.5px;top:236.5px" width="13" height="13" viewBox="0 0 13 13"><circle cx="6.500" cy="6.500" r="5.500" fill="#fff" stroke="#333" stroke-width="1"/></svg>
<svg class="t" style="left:677.6px;top:234.1px" width="26.5" height="17.2" viewBox="0 0 26.5 17.2"><text xml:space="preserve" style="white-space:pre" x="1.0" y="12.7" font-size="11.27" fill="#1a1a1a" textLength="10.0" lengthAdjust="spacingAndGlyphs">値</text><text xml:space="preserve" style="white-space:pre" x="11.0" y="12.7" font-size="11.27" fill="#1a1a1a" textLength="3.0" lengthAdjust="spacingAndGlyphs">(</text><text xml:space="preserve" style="white-space:pre" x="14.0" y="12.7" font-size="11.27" fill="#1a1a1a" textLength="6.5" lengthAdjust="spacingAndGlyphs">D</text><rect x="14.0" y="14.0" width="6.5" height="0.9" fill="#1a1a1a"/><text xml:space="preserve" style="white-space:pre" x="20.5" y="12.7" font-size="11.27" fill="#1a1a1a" textLength="3.0" lengthAdjust="spacingAndGlyphs">)</text></svg>
<div style="left:770.0px;top:234.0px;width:119.5px;height:19.0px;background:#fff;border:1px solid #adadad"></div>
<svg class="t" style="left:558.5px;top:259.9px" width="74.0" height="17.2" viewBox="0 0 74.0 17.2"><text xml:space="preserve" style="white-space:pre" x="1.0" y="12.7" font-size="11.27" fill="#1a1a1a" textLength="58.0" lengthAdjust="spacingAndGlyphs">変更させるセル</text><text xml:space="preserve" style="white-space:pre" x="59.0" y="12.7" font-size="11.27" fill="#1a1a1a" textLength="3.0" lengthAdjust="spacingAndGlyphs">(</text><text xml:space="preserve" style="white-space:pre" x="62.0" y="12.7" font-size="11.27" fill="#1a1a1a" textLength="6.0" lengthAdjust="spacingAndGlyphs">E</text><rect x="62.0" y="14.0" width="6.0" height="0.9" fill="#1a1a1a"/><text xml:space="preserve" style="white-space:pre" x="68.0" y="12.7" font-size="11.27" fill="#1a1a1a" textLength="3.0" lengthAdjust="spacingAndGlyphs">)</text></svg>
<div style="left:664.4px;top:259.7px;width:225.0px;height:18.3px;background:#fff;border:1px solid #adadad"></div>
<div class="x" style="left:668.3px;transform:scaleX(0.851);transform-origin:0 50%;top:261.9px;height:14.7px;line-height:14.7px;font-size:10.50px;color:#111;">$B$2:$D$2</div>
<svg class="t" style="left:558.5px;top:290.2px" width="43.0" height="17.2" viewBox="0 0 43.0 17.2"><text xml:space="preserve" style="white-space:pre" x="1.0" y="12.7" font-size="11.27" fill="#1a1a1a" textLength="37.5" lengthAdjust="spacingAndGlyphs">制限条件</text></svg>
<div style="left:601.0px;top:299.0px;width:334.0px;height:1.0px;background:#c8c8c8"></div>
<svg class="t" style="left:568.0px;top:311.6px" width="47.0" height="17.2" viewBox="0 0 47.0 17.2"><text xml:space="preserve" style="white-space:pre" x="1.0" y="12.7" font-size="11.27" fill="#1a1a1a" textLength="31.5" lengthAdjust="spacingAndGlyphs">セル参照</text><text xml:space="preserve" style="white-space:pre" x="32.5" y="12.7" font-size="11.27" fill="#1a1a1a" textLength="3.0" lengthAdjust="spacingAndGlyphs">(</text><text xml:space="preserve" style="white-space:pre" x="35.5" y="12.7" font-size="11.27" fill="#1a1a1a" textLength="5.5" lengthAdjust="spacingAndGlyphs">F</text><rect x="35.5" y="14.0" width="5.5" height="0.9" fill="#1a1a1a"/><text xml:space="preserve" style="white-space:pre" x="41.0" y="12.7" font-size="11.27" fill="#1a1a1a" textLength="3.0" lengthAdjust="spacingAndGlyphs">)</text></svg>
<svg class="t" style="left:693.0px;top:311.6px" width="54.0" height="17.2" viewBox="0 0 54.0 17.2"><text xml:space="preserve" style="white-space:pre" x="1.0" y="12.7" font-size="11.27" fill="#1a1a1a" textLength="37.0" lengthAdjust="spacingAndGlyphs">関連付け</text><text xml:space="preserve" style="white-space:pre" x="38.0" y="12.7" font-size="11.27" fill="#1a1a1a" textLength="3.0" lengthAdjust="spacingAndGlyphs">(</text><text xml:space="preserve" style="white-space:pre" x="41.0" y="12.7" font-size="11.27" fill="#1a1a1a" textLength="7.0" lengthAdjust="spacingAndGlyphs">G</text><rect x="41.0" y="14.0" width="7.0" height="0.9" fill="#1a1a1a"/><text xml:space="preserve" style="white-space:pre" x="48.0" y="12.7" font-size="11.27" fill="#1a1a1a" textLength="3.0" lengthAdjust="spacingAndGlyphs">)</text></svg>
<svg class="t" style="left:769.7px;top:311.6px" width="23.0" height="17.2" viewBox="0 0 23.0 17.2"><text xml:space="preserve" style="white-space:pre" x="1.0" y="12.7" font-size="11.27" fill="#1a1a1a" textLength="10.5" lengthAdjust="spacingAndGlyphs">値</text><text xml:space="preserve" style="white-space:pre" x="11.5" y="12.7" font-size="11.27" fill="#1a1a1a" textLength="3.0" lengthAdjust="spacingAndGlyphs">(</text><text xml:space="preserve" style="white-space:pre" x="14.5" y="12.7" font-size="11.27" fill="#1a1a1a" textLength="2.5" lengthAdjust="spacingAndGlyphs">I</text><rect x="14.5" y="14.0" width="2.5" height="0.9" fill="#1a1a1a"/><text xml:space="preserve" style="white-space:pre" x="17.0" y="12.7" font-size="11.27" fill="#1a1a1a" textLength="3.0" lengthAdjust="spacingAndGlyphs">)</text></svg>
<div style="left:894.0px;top:165.5px;width:20.0px;height:19.5px;background:#e4e4e4;border:1px solid #bdbdbd"></div>
<svg style="left:897.0px;top:168.8px" width="14" height="13" viewBox="0 0 14 13"><rect x=".5" y=".5" width="13" height="11" fill="#e3eefb" stroke="#7ba4d4" stroke-width="1"/><rect x=".8" y=".8" width="12.400" height="2.400" fill="#2f6fb8"/><path d="M7 4.200Q10.800 7 9.600 8.300H8.100V12.300H5.900V8.300H4.400Q3.200 7 7 4.200z" fill="#6cc63a" stroke="#2f8212" stroke-width=".7"/></svg>
<div style="left:894.0px;top:233.5px;width:20.0px;height:19.5px;background:#e4e4e4;border:1px solid #bdbdbd"></div>
<svg style="left:897.0px;top:236.8px" width="14" height="13" viewBox="0 0 14 13"><rect x=".5" y=".5" width="13" height="11" fill="#e3eefb" stroke="#7ba4d4" stroke-width="1"/><rect x=".8" y=".8" width="12.400" height="2.400" fill="#2f6fb8"/><path d="M7 4.200Q10.800 7 9.600 8.300H8.100V12.300H5.900V8.300H4.400Q3.200 7 7 4.200z" fill="#6cc63a" stroke="#2f8212" stroke-width=".7"/></svg>
<div style="left:568.9px;top:333.6px;width:91.5px;height:18.2px;background:#fff;border:1px solid #adadad"></div>
<div class="x" style="left:572.8px;transform:scaleX(0.787);transform-origin:0 50%;top:335.9px;height:14.7px;line-height:14.7px;font-size:10.50px;color:#111;">$E$3</div>
<div style="left:665.6px;top:332.6px;width:20.2px;height:20.2px;background:#e4e4e4;border:1px solid #bdbdbd"></div>
<svg style="left:668.7px;top:336.2px" width="14" height="13" viewBox="0 0 14 13"><rect x=".5" y=".5" width="13" height="11" fill="#e3eefb" stroke="#7ba4d4" stroke-width="1"/><rect x=".8" y=".8" width="12.400" height="2.400" fill="#2f6fb8"/><path d="M7 4.200Q10.800 7 9.600 8.300H8.100V12.300H5.900V8.300H4.400Q3.200 7 7 4.200z" fill="#6cc63a" stroke="#2f8212" stroke-width=".7"/></svg>
<div style="left:693.2px;top:333.6px;width:66.0px;height:18.2px;background:#fff;border:1px solid #adadad"></div>
<div class="x" style="left:697.2px;transform:scaleX(0.913);transform-origin:0 50%;top:335.9px;height:14.7px;line-height:14.7px;font-size:10.50px;color:#111;">&lt;=</div>
<div style="left:744.7px;top:334.8px;width:13.5px;height:15.8px;background:#e6e6e6;border:1px solid #c2c2c2"></div>
<svg style="left:747.2px;top:340.4px" width="9" height="6" viewBox="0 0 9 6"><path d="M1 1l3.500 3.500L8 1" fill="none" stroke="#444" stroke-width="1.100"/></svg>
<div style="left:770.3px;top:333.6px;width:91.2px;height:18.2px;background:#fff;border:1px solid #adadad"></div>
<div class="x" style="left:773.8px;transform:scaleX(0.794);transform-origin:0 50%;top:335.9px;height:14.7px;line-height:14.7px;font-size:10.50px;color:#111;">$F$3</div>
<div style="left:866.3px;top:332.6px;width:20.2px;height:20.2px;background:#e4e4e4;border:1px solid #bdbdbd"></div>
<svg style="left:869.4px;top:336.2px" width="14" height="13" viewBox="0 0 14 13"><rect x=".5" y=".5" width="13" height="11" fill="#e3eefb" stroke="#7ba4d4" stroke-width="1"/><rect x=".8" y=".8" width="12.400" height="2.400" fill="#2f6fb8"/><path d="M7 4.200Q10.800 7 9.600 8.300H8.100V12.300H5.900V8.300H4.400Q3.200 7 7 4.200z" fill="#6cc63a" stroke="#2f8212" stroke-width=".7"/></svg>
<div style="left:894.2px;top:332.6px;width:20.2px;height:20.2px;background:#e4e4e4;border:1px solid #bdbdbd"></div>
<svg style="left:897.3px;top:337.2px" width="14" height="11" viewBox="0 0 14 11"><rect x=".5" y=".5" width="13" height="10" fill="#fff" stroke="#999" stroke-width="1"/><rect x="1" y="4" width="12" height="3.500" fill="#e02020"/><path d="M1 3.800H13M1 7.500H13M5 .5V10.500M9.300 .5V10.500" stroke="#b9b9b9" stroke-width=".9"/></svg>
<div style="left:568.9px;top:356.7px;width:91.5px;height:18.2px;background:#fff;border:1px solid #adadad"></div>
<div class="x" style="left:572.8px;transform:scaleX(0.787);transform-origin:0 50%;top:358.9px;height:14.7px;line-height:14.7px;font-size:10.50px;color:#111;">$E$4</div>
<div style="left:665.6px;top:355.7px;width:20.2px;height:20.2px;background:#e4e4e4;border:1px solid #bdbdbd"></div>
<svg style="left:668.7px;top:359.3px" width="14" height="13" viewBox="0 0 14 13"><rect x=".5" y=".5" width="13" height="11" fill="#e3eefb" stroke="#7ba4d4" stroke-width="1"/><rect x=".8" y=".8" width="12.400" height="2.400" fill="#2f6fb8"/><path d="M7 4.200Q10.800 7 9.600 8.300H8.100V12.300H5.900V8.300H4.400Q3.200 7 7 4.200z" fill="#6cc63a" stroke="#2f8212" stroke-width=".7"/></svg>
<div style="left:693.2px;top:356.7px;width:66.0px;height:18.2px;background:#fff;border:1px solid #adadad"></div>
<div class="x" style="left:697.2px;transform:scaleX(0.913);transform-origin:0 50%;top:358.9px;height:14.7px;line-height:14.7px;font-size:10.50px;color:#111;">&lt;=</div>
<div style="left:744.7px;top:357.9px;width:13.5px;height:15.8px;background:#e6e6e6;border:1px solid #c2c2c2"></div>
<svg style="left:747.2px;top:363.5px" width="9" height="6" viewBox="0 0 9 6"><path d="M1 1l3.500 3.500L8 1" fill="none" stroke="#444" stroke-width="1.100"/></svg>
<div style="left:770.3px;top:356.7px;width:91.2px;height:18.2px;background:#fff;border:1px solid #adadad"></div>
<div class="x" style="left:773.8px;transform:scaleX(0.794);transform-origin:0 50%;top:358.9px;height:14.7px;line-height:14.7px;font-size:10.50px;color:#111;">$F$4</div>
<div style="left:866.3px;top:355.7px;width:20.2px;height:20.2px;background:#e4e4e4;border:1px solid #bdbdbd"></div>
<svg style="left:869.4px;top:359.3px" width="14" height="13" viewBox="0 0 14 13"><rect x=".5" y=".5" width="13" height="11" fill="#e3eefb" stroke="#7ba4d4" stroke-width="1"/><rect x=".8" y=".8" width="12.400" height="2.400" fill="#2f6fb8"/><path d="M7 4.200Q10.800 7 9.600 8.300H8.100V12.300H5.900V8.300H4.400Q3.200 7 7 4.200z" fill="#6cc63a" stroke="#2f8212" stroke-width=".7"/></svg>
<div style="left:894.2px;top:355.7px;width:20.2px;height:20.2px;background:#e4e4e4;border:1px solid #bdbdbd"></div>
<svg style="left:897.3px;top:360.3px" width="14" height="11" viewBox="0 0 14 11"><rect x=".5" y=".5" width="13" height="10" fill="#fff" stroke="#999" stroke-width="1"/><rect x="1" y="4" width="12" height="3.500" fill="#e02020"/><path d="M1 3.800H13M1 7.500H13M5 .5V10.500M9.300 .5V10.500" stroke="#b9b9b9" stroke-width=".9"/></svg>
<div style="left:568.9px;top:379.7px;width:91.5px;height:18.2px;background:#fff;border:1px solid #adadad"></div>
<div class="x" style="left:572.8px;transform:scaleX(0.787);transform-origin:0 50%;top:382.0px;height:14.7px;line-height:14.7px;font-size:10.50px;color:#111;">$E$5</div>
<div style="left:665.6px;top:378.7px;width:20.2px;height:20.2px;background:#e4e4e4;border:1px solid #bdbdbd"></div>
<svg style="left:668.7px;top:382.3px" width="14" height="13" viewBox="0 0 14 13"><rect x=".5" y=".5" width="13" height="11" fill="#e3eefb" stroke="#7ba4d4" stroke-width="1"/><rect x=".8" y=".8" width="12.400" height="2.400" fill="#2f6fb8"/><path d="M7 4.200Q10.800 7 9.600 8.300H8.100V12.300H5.900V8.300H4.400Q3.200 7 7 4.200z" fill="#6cc63a" stroke="#2f8212" stroke-width=".7"/></svg>
<div style="left:693.2px;top:379.7px;width:66.0px;height:18.2px;background:#fff;border:1px solid #adadad"></div>
<div class="x" style="left:697.2px;transform:scaleX(0.913);transform-origin:0 50%;top:382.0px;height:14.7px;line-height:14.7px;font-size:10.50px;color:#111;">&lt;=</div>
<div style="left:744.7px;top:380.9px;width:13.5px;height:15.8px;background:#e6e6e6;border:1px solid #c2c2c2"></div>
<svg style="left:747.2px;top:386.5px" width="9" height="6" viewBox="0 0 9 6"><path d="M1 1l3.500 3.500L8 1" fill="none" stroke="#444" stroke-width="1.100"/></svg>
<div style="left:770.3px;top:379.7px;width:91.2px;height:18.2px;background:#fff;border:1px solid #adadad"></div>
<div class="x" style="left:773.8px;transform:scaleX(0.794);transform-origin:0 50%;top:382.0px;height:14.7px;line-height:14.7px;font-size:10.50px;color:#111;">$F$5</div>
<div style="left:866.3px;top:378.7px;width:20.2px;height:20.2px;background:#e4e4e4;border:1px solid #bdbdbd"></div>
<svg style="left:869.4px;top:382.3px" width="14" height="13" viewBox="0 0 14 13"><rect x=".5" y=".5" width="13" height="11" fill="#e3eefb" stroke="#7ba4d4" stroke-width="1"/><rect x=".8" y=".8" width="12.400" height="2.400" fill="#2f6fb8"/><path d="M7 4.200Q10.800 7 9.600 8.300H8.100V12.300H5.900V8.300H4.400Q3.200 7 7 4.200z" fill="#6cc63a" stroke="#2f8212" stroke-width=".7"/></svg>
<div style="left:894.2px;top:378.7px;width:20.2px;height:20.2px;background:#e4e4e4;border:1px solid #bdbdbd"></div>
<svg style="left:897.3px;top:383.3px" width="14" height="11" viewBox="0 0 14 11"><rect x=".5" y=".5" width="13" height="10" fill="#fff" stroke="#999" stroke-width="1"/><rect x="1" y="4" width="12" height="3.500" fill="#e02020"/><path d="M1 3.800H13M1 7.500H13M5 .5V10.500M9.300 .5V10.500" stroke="#b9b9b9" stroke-width=".9"/></svg>
<div style="left:568.9px;top:402.8px;width:91.5px;height:18.2px;background:#fff;border:1px solid #adadad"></div>
<div class="x" style="left:572.8px;transform:scaleX(0.787);transform-origin:0 50%;top:405.0px;height:14.7px;line-height:14.7px;font-size:10.50px;color:#111;">$E$6</div>
<div style="left:665.6px;top:401.8px;width:20.2px;height:20.2px;background:#e4e4e4;border:1px solid #bdbdbd"></div>
<svg style="left:668.7px;top:405.4px" width="14" height="13" viewBox="0 0 14 13"><rect x=".5" y=".5" width="13" height="11" fill="#e3eefb" stroke="#7ba4d4" stroke-width="1"/><rect x=".8" y=".8" width="12.400" height="2.400" fill="#2f6fb8"/><path d="M7 4.200Q10.800 7 9.600 8.300H8.100V12.300H5.900V8.300H4.400Q3.200 7 7 4.200z" fill="#6cc63a" stroke="#2f8212" stroke-width=".7"/></svg>
<div style="left:693.2px;top:402.8px;width:66.0px;height:18.2px;background:#fff;border:1px solid #adadad"></div>
<div class="x" style="left:697.2px;transform:scaleX(0.913);transform-origin:0 50%;top:405.0px;height:14.7px;line-height:14.7px;font-size:10.50px;color:#111;">&lt;=</div>
<div style="left:744.7px;top:403.9px;width:13.5px;height:15.8px;background:#e6e6e6;border:1px solid #c2c2c2"></div>
<svg style="left:747.2px;top:409.6px" width="9" height="6" viewBox="0 0 9 6"><path d="M1 1l3.500 3.500L8 1" fill="none" stroke="#444" stroke-width="1.100"/></svg>
<div style="left:770.3px;top:402.8px;width:91.2px;height:18.2px;background:#fff;border:1px solid #adadad"></div>
<div class="x" style="left:773.8px;transform:scaleX(0.794);transform-origin:0 50%;top:405.0px;height:14.7px;line-height:14.7px;font-size:10.50px;color:#111;">$F$6</div>
<div style="left:866.3px;top:401.8px;width:20.2px;height:20.2px;background:#e4e4e4;border:1px solid #bdbdbd"></div>
<svg style="left:869.4px;top:405.4px" width="14" height="13" viewBox="0 0 14 13"><rect x=".5" y=".5" width="13" height="11" fill="#e3eefb" stroke="#7ba4d4" stroke-width="1"/><rect x=".8" y=".8" width="12.400" height="2.400" fill="#2f6fb8"/><path d="M7 4.200Q10.800 7 9.600 8.300H8.100V12.300H5.900V8.300H4.400Q3.200 7 7 4.200z" fill="#6cc63a" stroke="#2f8212" stroke-width=".7"/></svg>
<div style="left:894.2px;top:401.8px;width:20.2px;height:20.2px;background:#e4e4e4;border:1px solid #bdbdbd"></div>
<svg style="left:897.3px;top:406.4px" width="14" height="11" viewBox="0 0 14 11"><rect x=".5" y=".5" width="13" height="10" fill="#fff" stroke="#999" stroke-width="1"/><rect x="1" y="4" width="12" height="3.500" fill="#e02020"/><path d="M1 3.800H13M1 7.500H13M5 .5V10.500M9.300 .5V10.500" stroke="#b9b9b9" stroke-width=".9"/></svg>
<div style="left:924.5px;top:333.0px;width:11.5px;height:89.0px;background:#f0f0f0"></div>
<div style="left:925.0px;top:345.6px;width:10.5px;height:31.0px;background:#cdcdcd"></div>
<svg style="left:925.500px;top:336px" width="10" height="7" viewBox="0 0 10 7"><path d="M1.500 5.500L5 2l3.500 3.500" fill="none" stroke="#222" stroke-width="1.400"/></svg>
<svg style="left:925.500px;top:412px" width="10" height="7" viewBox="0 0 10 7"><path d="M1.500 1.500L5 5l3.500-3.500" fill="none" stroke="#222" stroke-width="1.400"/></svg>
<div style="left:549.0px;top:439.5px;width:397.0px;height:1.0px;background:#d4d4d4"></div>
<div style="left:549.0px;top:440.5px;width:397.0px;height:1.0px;background:#fff"></div>
<div style="left:560.3px;top:451.3px;width:84.0px;height:19.0px;background:#e1e1e1;border:1px solid #adadad"></div>
<svg class="t" style="left:574.8px;top:452.0px" width="57.0" height="17.2" viewBox="0 0 57.0 17.2"><text xml:space="preserve" style="white-space:pre" x="1.0" y="12.7" font-size="11.27" fill="#1a1a1a" textLength="35.0" lengthAdjust="spacingAndGlyphs">オプション</text><text xml:space="preserve" style="white-space:pre" x="36.0" y="12.7" font-size="11.27" fill="#1a1a1a" textLength="3.0" lengthAdjust="spacingAndGlyphs">(</text><text xml:space="preserve" style="white-space:pre" x="39.0" y="12.7" font-size="11.27" fill="#1a1a1a" textLength="4.5" lengthAdjust="spacingAndGlyphs">J</text><rect x="39.0" y="14.0" width="4.5" height="0.9" fill="#1a1a1a"/><text xml:space="preserve" style="white-space:pre" x="43.5" y="12.7" font-size="11.27" fill="#1a1a1a" textLength="10.5" lengthAdjust="spacingAndGlyphs">)...</text></svg>
<div style="left:656.5px;top:451.3px;width:84.3px;height:19.0px;background:#e1e1e1;border:1px solid #adadad"></div>
<svg class="t" style="left:678.6px;top:452.0px" width="42.0" height="17.2" viewBox="0 0 42.0 17.2"><text xml:space="preserve" style="white-space:pre" x="1.0" y="12.7" font-size="11.27" fill="#1a1a1a" textLength="25.5" lengthAdjust="spacingAndGlyphs">ヘルプ</text><text xml:space="preserve" style="white-space:pre" x="26.5" y="12.7" font-size="11.27" fill="#1a1a1a" textLength="3.0" lengthAdjust="spacingAndGlyphs">(</text><text xml:space="preserve" style="white-space:pre" x="29.5" y="12.7" font-size="11.27" fill="#1a1a1a" textLength="6.5" lengthAdjust="spacingAndGlyphs">H</text><rect x="29.5" y="14.0" width="6.5" height="0.9" fill="#1a1a1a"/><text xml:space="preserve" style="white-space:pre" x="36.0" y="12.7" font-size="11.27" fill="#1a1a1a" textLength="3.0" lengthAdjust="spacingAndGlyphs">)</text></svg>
<div style="left:754.0px;top:451.3px;width:84.0px;height:19.0px;background:#e1e1e1;border:1px solid #adadad"></div>
<svg class="t" style="left:782.0px;top:452.0px" width="30.0" height="17.2" viewBox="0 0 30.0 17.2"><text xml:space="preserve" style="white-space:pre" x="1.0" y="12.7" font-size="11.27" fill="#1a1a1a" textLength="24.5" lengthAdjust="spacingAndGlyphs">閉じる</text></svg>
<div style="left:850.7px;top:451.3px;width:84.0px;height:19.0px;background:#e1e1e1;border:1px solid #adadad"></div>
<svg class="t" style="left:875.2px;top:452.0px" width="37.0" height="17.2" viewBox="0 0 37.0 17.2"><text xml:space="preserve" style="white-space:pre" x="1.0" y="12.7" font-size="11.27" fill="#1a1a1a" textLength="21.0" lengthAdjust="spacingAndGlyphs">解決</text><text xml:space="preserve" style="white-space:pre" x="22.0" y="12.7" font-size="11.27" fill="#1a1a1a" textLength="3.0" lengthAdjust="spacingAndGlyphs">(</text><text xml:space="preserve" style="white-space:pre" x="25.0" y="12.7" font-size="11.27" fill="#1a1a1a" textLength="6.0" lengthAdjust="spacingAndGlyphs">K</text><rect x="25.0" y="14.0" width="6.0" height="0.9" fill="#1a1a1a"/><text xml:space="preserve" style="white-space:pre" x="31.0" y="12.7" font-size="11.27" fill="#1a1a1a" textLength="3.0" lengthAdjust="spacingAndGlyphs">)</text></svg>
<div class="x" style="left:584.2px;transform:scaleX(0.912);transform-origin:0 50%;top:340.7px;height:35.0px;line-height:35.0px;font-size:25.00px;color:#000;">4V67BTJC</div>
</div>
<svg style="left:0;top:0" width="1280" height="720" viewBox="0 0 1280 720"><g fill="#4472c4" stroke="#3459a0" stroke-width="1" stroke-linejoin="miter"><path d="M462.200 29.800H707.800V90.300H563.400L429.400 167L502 90.300H462.200z"/><path d="M729.5 117.5H975.5A9.5 9.5 0 0 1 985.0 127.0V165.0A9.5 9.5 0 0 1 975.5 174.5H729.5A9.5 9.5 0 0 1 720.0 165.0V165.8L696.1 174.9L720.0 150.8V127.0A9.5 9.5 0 0 1 729.5 117.5Z"/><path d="M771.5 252.0H1012.5A8.5 8.5 0 0 1 1021.0 260.5V294.5A8.5 8.5 0 0 1 1012.5 303.0H771.5A8.5 8.5 0 0 1 763.0 294.5V273.7L731.0 268.0L763.0 260.5V260.5A8.5 8.5 0 0 1 771.5 252.0Z"/><path d="M340.0 387.3H585.3A10 10 0 0 1 595.3 397.3V436.5A10 10 0 0 1 585.3 446.5H340.0A10 10 0 0 1 330.0 436.5V412.0L300.3 393.2L330.0 397.0V397.3A10 10 0 0 1 340.0 387.3Z"/><path d="M812.5 492.0H850.8L834.2 415.0L944.0 492.0H1140.5A24.5 24.5 0 0 1 1165.0 516.5V628.5A24.5 24.5 0 0 1 1140.5 653.0H812.5A24.5 24.5 0 0 1 788.0 628.5V516.5A24.5 24.5 0 0 1 812.5 492.0Z"/></g></svg>
<div class="x" style="left:471.5px;top:35.9px;height:18.1px;line-height:18.1px;font-size:12.95px;color:#fff;">=SUMPRODUCT(B$2:D$2;B3:D3)</div>
<div class="x" style="left:488.0px;top:51.2px;height:18.1px;line-height:18.1px;font-size:12.95px;color:#fff;">B2*B3+C2*C3+D2*D3</div>
<div class="m" style="left:496.9px;top:66.9px;height:18.5px;line-height:18.5px;font-size:13.20px;letter-spacing:-0.12px;word-spacing:-0.44px;transform:scaleX(1.2);transform-origin:0 50%;">4<i>x</i><sub>1</sub> + 0<i>x</i><sub>2</sub> + 7<i>x</i><sub>3</sub></div>
<div class="m" style="left:741.0px;top:130.8px;height:32.9px;line-height:32.9px;font-size:23.50px;letter-spacing:-0.13px;word-spacing:-0.60px;transform:scaleX(1.2);transform-origin:0 50%;">80<i>x</i><sub>1</sub> + 110<i>x</i><sub>2</sub> + 95<i>x</i><sub>3</sub></div>
<div class="x" style="left:774.5px;top:250.5px;height:20.3px;line-height:20.3px;font-size:14.50px;color:#fff;">B2,C2,D2</div>
<div class="m" style="left:847.5px;top:270.3px;height:30.8px;line-height:30.8px;font-size:22.00px;letter-spacing:-0.13px;word-spacing:-0.64px;transform:scaleX(1.2);transform-origin:0 50%;"><i>x</i><sub>1</sub>, <i>x</i><sub>2</sub>, <i>x</i><sub>3</sub></div>
<div class="m" style="left:396.9px;top:388.5px;height:30.8px;line-height:30.8px;font-size:22.00px;letter-spacing:-0.01px;word-spacing:-0.04px;transform:scaleX(1.2);transform-origin:0 50%;">0 ≤ <i>x</i><sub>1</sub>, <i>x</i><sub>2</sub>, <i>x</i><sub>3</sub></div>
<div class="m" style="left:394.7px;top:415.0px;height:30.8px;line-height:30.8px;font-size:22.00px;letter-spacing:-0.13px;word-spacing:-0.64px;transform:scaleX(1.2);transform-origin:0 50%;"><i>x</i><sub>1</sub>, <i>x</i><sub>2</sub>, <i>x</i><sub>3</sub></div>
<svg class="t" style="left:486.5px;top:415.2px" width="80" height="32" viewBox="0 0 80 32"><text xml:space="preserve" style="white-space:pre" x="1.0" y="24" font-size="21.8" fill="#fff" textLength="65.0" lengthAdjust="spacingAndGlyphs">は整数</text></svg>
<div class="m" style="left:864.7px;top:500.0px;height:31.2px;line-height:31.2px;font-size:22.30px;letter-spacing:0.15px;word-spacing:0.50px;transform:scaleX(1.2);transform-origin:0 50%;">4<i>x</i><sub>1</sub> + 0<i>x</i><sub>2</sub> + 7<i>x</i><sub>3</sub> ≤ 90</div>
<div class="m" style="left:864.7px;top:528.2px;height:31.2px;line-height:31.2px;font-size:22.30px;letter-spacing:0.15px;word-spacing:0.50px;transform:scaleX(1.2);transform-origin:0 50%;">1<i>x</i><sub>1</sub> + 3<i>x</i><sub>2</sub> + 9<i>x</i><sub>3</sub> ≤ 60</div>
<div class="m" style="left:851.0px;top:556.4px;height:31.2px;line-height:31.2px;font-size:22.30px;letter-spacing:0.12px;word-spacing:0.46px;transform:scaleX(1.2);transform-origin:0 50%;">6<i>x</i><sub>1</sub> + 0<i>x</i><sub>2</sub> + 14<i>x</i><sub>3</sub> ≤ 110</div>
<div class="m" style="left:858.0px;top:584.6px;height:31.2px;line-height:31.2px;font-size:22.30px;letter-spacing:0.14px;word-spacing:0.49px;transform:scaleX(1.2);transform-origin:0 50%;">4<i>x</i><sub>1</sub> + 10<i>x</i><sub>2</sub> + 7<i>x</i><sub>3</sub> ≤ 75</div>
</body></html>
